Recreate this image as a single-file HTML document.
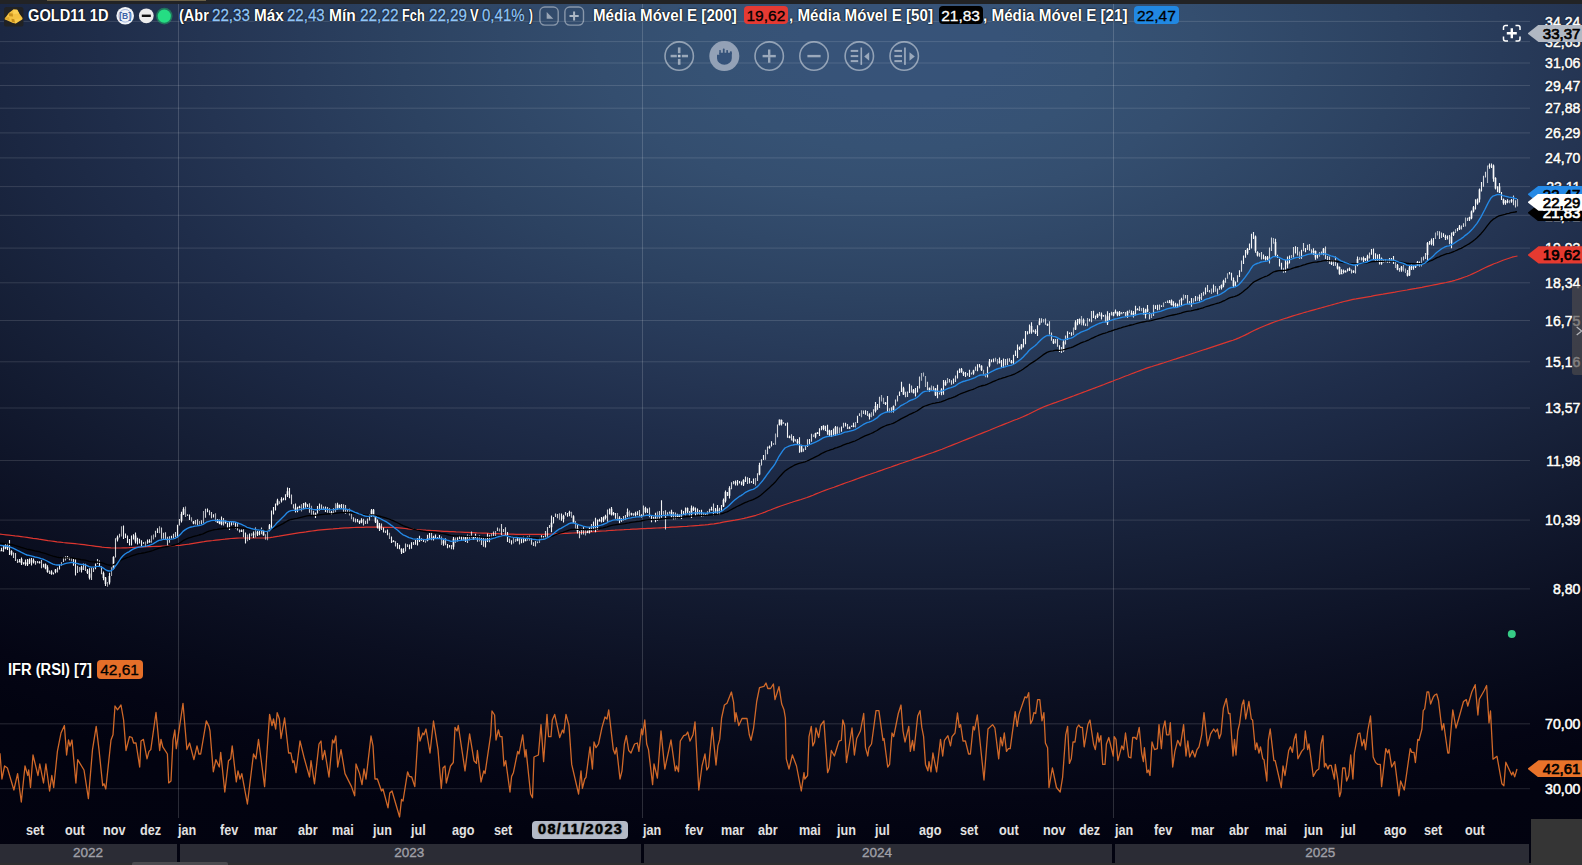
<!DOCTYPE html>
<html lang="pt-BR">
<head>
<meta charset="utf-8">
<title>GOLD11 1D</title>
<style>
*{box-sizing:border-box;margin:0;padding:0}
html,body{width:1582px;height:865px;overflow:hidden;background:#030412}
body{position:relative;font-family:"Liberation Sans",sans-serif;font-weight:bold;color:#fff;
 background:radial-gradient(ellipse 2000px 1000px at 900px 50px,rgb(55,83,121) 0%,rgb(55,83,120) 5%,rgb(54,82,116) 10%,rgb(52,78,111) 15%,rgb(48,72,104) 20%,rgb(44,66,97) 25%,rgb(40,59,90) 30%,rgb(36,52,82) 35%,rgb(31,45,74) 40%,rgb(27,39,66) 45%,rgb(23,33,57) 50%,rgb(19,27,49) 55%,rgb(15,21,41) 60%,rgb(11,15,33) 65%,rgb(7,10,26) 70%,rgb(4,5,20) 75%,rgb(2,3,16) 80%,rgb(2,2,15) 100%);}
.chart{position:absolute;left:0;top:0}
.topstrip{position:absolute;left:0;top:0;width:1582px;height:3.7px;background:#222325}
.topstrip i{position:absolute;left:46.5px;top:0;width:159px;height:1.2px;background:#6a6048}
.t{position:absolute;white-space:nowrap;font-size:15.8px;line-height:18px;top:6.7px;transform-origin:0 50%;text-shadow:0 0 2px #000,0 0 1px #000}
.v{font-weight:normal;color:#92c6f8;-webkit-text-stroke:.3px #92c6f8}
.tag{position:absolute;top:6.1px;height:18.3px;border-radius:4px;font-size:15.5px;line-height:19px;overflow:hidden;text-align:center;color:#000;font-weight:normal;-webkit-text-stroke:.3px currentColor}
.ax{position:absolute;left:1538px;width:42.4px;text-align:right;font-size:14.1px;line-height:19px;white-space:nowrap;font-weight:normal;-webkit-text-stroke:.5px #fff;text-shadow:0 0 2px #000,0 0 1px #000}
.mo{position:absolute;top:821px;font-size:14px;line-height:18px;transform:scaleX(.9);transform-origin:0 50%;color:#e2e2e2;white-space:nowrap}
.yr{position:absolute;top:843.8px;height:18.8px;background:#2b2c35;color:#a0a0a8;font-size:13.5px;line-height:18.8px;font-weight:normal;-webkit-text-stroke:.35px #a0a0a8}
.yr span{position:absolute;top:0}
.ptag{position:absolute;left:1527.5px;width:54.5px;height:17.3px;font-size:15px;line-height:17.3px;color:#000;text-align:right;padding-right:1.6px;font-weight:normal;-webkit-text-stroke:.7px currentColor;
 clip-path:polygon(0 50%,11px 0,100% 0,100% 100%,11px 100%)}
</style>
</head>
<body>
<svg class="chart" width="1582" height="865" viewBox="0 0 1582 865">
<path d="M0 588.9H1530M0 520.1H1530M0 460.5H1530M0 408H1530M0 361.8H1530M0 320.5H1530M0 282.8H1530M0 248.1H1530M0 215.3H1530M0 186.6H1530M0 157.9H1530M0 132.9H1530M0 108.2H1530M0 85.5H1530M0 63.0H1530M0 41.6H1530M0 21.4H1530" stroke="#fff" stroke-opacity=".13" stroke-width="1" fill="none"/>
<path d="M0 723.8H1530M0 788.6H1530" stroke="#fff" stroke-opacity=".1" stroke-width="1.4" fill="none"/>
<path d="M178.5 3.4V818M642.5 3.4V818M1113.5 3.4V818" stroke="#fff" stroke-opacity=".16" stroke-width="1" fill="none"/>
<path d="M0.0 534.2 L3.0 534.5 L6.0 534.8 L9.0 535.1 L12.0 535.5 L15.0 535.9 L18.0 536.2 L21.0 536.6 L24.0 537.0 L27.0 537.4 L30.0 537.8 L33.0 538.3 L36.0 538.7 L39.0 539.2 L42.0 539.6 L45.0 540.1 L48.0 540.6 L51.0 541.0 L54.0 541.4 L57.0 541.8 L60.0 542.1 L63.0 542.5 L66.0 542.8 L69.0 543.1 L72.0 543.4 L75.0 543.7 L78.0 544.0 L81.0 544.3 L84.0 544.7 L87.0 545.1 L90.0 545.5 L93.0 545.9 L96.0 546.3 L99.0 546.7 L102.0 547.2 L105.0 547.5 L108.0 547.7 L111.0 547.9 L114.0 548.0 L117.0 548.0 L120.0 548.0 L123.0 547.9 L126.0 547.8 L129.0 547.7 L132.0 547.5 L135.0 547.3 L138.0 547.1 L141.0 547.0 L144.0 546.8 L147.0 546.7 L150.0 546.6 L153.0 546.5 L156.0 546.4 L159.0 546.3 L162.0 546.1 L165.0 546.0 L168.0 545.9 L171.0 545.8 L174.0 545.7 L177.0 545.5 L180.0 545.3 L183.0 544.9 L186.0 544.5 L189.0 544.1 L192.0 543.6 L195.0 543.1 L198.0 542.6 L201.0 542.1 L204.0 541.7 L207.0 541.2 L210.0 540.8 L213.0 540.5 L216.0 540.1 L219.0 539.8 L222.0 539.5 L225.0 539.2 L228.0 538.8 L231.0 538.5 L234.0 538.3 L237.0 538.1 L240.0 538.0 L243.0 538.0 L246.0 538.0 L249.0 538.0 L252.0 538.0 L255.0 538.0 L258.0 538.0 L261.0 538.0 L264.0 538.0 L267.0 537.8 L270.0 537.6 L273.0 537.2 L276.0 536.7 L279.0 536.2 L282.0 535.6 L285.0 535.1 L288.0 534.6 L291.0 534.1 L294.0 533.6 L297.0 533.1 L300.0 532.7 L303.0 532.3 L306.0 531.9 L309.0 531.4 L312.0 531.0 L315.0 530.6 L318.0 530.2 L321.0 529.9 L324.0 529.6 L327.0 529.3 L330.0 529.1 L333.0 528.9 L336.0 528.6 L339.0 528.4 L342.0 528.1 L345.0 527.9 L348.0 527.8 L351.0 527.6 L354.0 527.5 L357.0 527.4 L360.0 527.4 L363.0 527.3 L366.0 527.2 L369.0 527.1 L372.0 527.1 L375.0 527.1 L378.0 527.1 L381.0 527.2 L384.0 527.3 L387.0 527.3 L390.0 527.4 L393.0 527.5 L396.0 527.6 L399.0 527.9 L402.0 528.2 L405.0 528.5 L408.0 528.8 L411.0 529.1 L414.0 529.4 L417.0 529.6 L420.0 529.8 L423.0 530.0 L426.0 530.2 L429.0 530.3 L432.0 530.5 L435.0 530.7 L438.0 530.9 L441.0 531.1 L444.0 531.3 L447.0 531.4 L450.0 531.6 L453.0 531.7 L456.0 531.9 L459.0 532.0 L462.0 532.1 L465.0 532.3 L468.0 532.4 L471.0 532.6 L474.0 532.7 L477.0 532.9 L480.0 533.0 L483.0 533.1 L486.0 533.2 L489.0 533.4 L492.0 533.5 L495.0 533.6 L498.0 533.7 L501.0 533.9 L504.0 534.0 L507.0 534.1 L510.0 534.2 L513.0 534.2 L516.0 534.3 L519.0 534.3 L522.0 534.3 L525.0 534.3 L528.0 534.3 L531.0 534.3 L534.0 534.3 L537.0 534.3 L540.0 534.3 L543.0 534.3 L546.0 534.2 L549.0 534.1 L552.0 534.0 L555.0 533.9 L558.0 533.7 L561.0 533.6 L564.0 533.4 L567.0 533.3 L570.0 533.1 L573.0 533.0 L576.0 532.8 L579.0 532.6 L582.0 532.4 L585.0 532.2 L588.0 532.0 L591.0 531.8 L594.0 531.6 L597.0 531.4 L600.0 531.2 L603.0 531.0 L606.0 530.8 L609.0 530.5 L612.0 530.3 L615.0 530.2 L618.0 530.0 L621.0 529.8 L624.0 529.7 L627.0 529.5 L630.0 529.4 L633.0 529.2 L636.0 529.1 L639.0 528.9 L642.0 528.7 L645.0 528.6 L648.0 528.4 L651.0 528.3 L654.0 528.1 L657.0 528.0 L660.0 527.8 L663.0 527.7 L666.0 527.5 L669.0 527.4 L672.0 527.2 L675.0 527.1 L678.0 526.9 L681.0 526.7 L684.0 526.5 L687.0 526.3 L690.0 526.0 L693.0 525.8 L696.0 525.6 L699.0 525.4 L702.0 525.1 L705.0 524.9 L708.0 524.6 L711.0 524.2 L714.0 523.8 L717.0 523.3 L720.0 522.8 L723.0 522.2 L726.0 521.7 L729.0 521.2 L732.0 520.7 L735.0 520.2 L738.0 519.6 L741.0 519.0 L744.0 518.4 L747.0 517.7 L750.0 516.9 L753.0 516.1 L756.0 515.3 L759.0 514.3 L762.0 513.2 L765.0 512.1 L768.0 510.8 L771.0 509.7 L774.0 508.5 L777.0 507.4 L780.0 506.3 L783.0 505.2 L786.0 504.2 L789.0 503.2 L792.0 502.3 L795.0 501.3 L798.0 500.4 L801.0 499.5 L804.0 498.5 L807.0 497.5 L810.0 496.4 L813.0 495.2 L816.0 493.9 L819.0 492.7 L822.0 491.5 L825.0 490.4 L828.0 489.3 L831.0 488.2 L834.0 487.2 L837.0 486.1 L840.0 485.0 L843.0 483.9 L846.0 482.8 L849.0 481.8 L852.0 480.7 L855.0 479.6 L858.0 478.5 L861.0 477.4 L864.0 476.4 L867.0 475.3 L870.0 474.3 L873.0 473.2 L876.0 472.2 L879.0 471.1 L882.0 470.1 L885.0 469.0 L888.0 468.0 L891.0 467.0 L894.0 465.9 L897.0 464.9 L900.0 463.8 L903.0 462.8 L906.0 461.7 L909.0 460.7 L912.0 459.7 L915.0 458.6 L918.0 457.6 L921.0 456.6 L924.0 455.6 L927.0 454.5 L930.0 453.5 L933.0 452.5 L936.0 451.4 L939.0 450.3 L942.0 449.2 L945.0 448.0 L948.0 446.8 L951.0 445.6 L954.0 444.4 L957.0 443.2 L960.0 442.0 L963.0 440.8 L966.0 439.6 L969.0 438.4 L972.0 437.2 L975.0 436.0 L978.0 434.8 L981.0 433.6 L984.0 432.4 L987.0 431.2 L990.0 430.0 L993.0 428.7 L996.0 427.5 L999.0 426.3 L1002.0 425.1 L1005.0 423.9 L1008.0 422.7 L1011.0 421.5 L1014.0 420.3 L1017.0 419.2 L1020.0 418.0 L1023.0 416.7 L1026.0 415.4 L1029.0 414.0 L1032.0 412.5 L1035.0 411.0 L1038.0 409.5 L1041.0 408.1 L1044.0 406.8 L1047.0 405.6 L1050.0 404.5 L1053.0 403.4 L1056.0 402.4 L1059.0 401.3 L1062.0 400.2 L1065.0 399.1 L1068.0 398.0 L1071.0 396.9 L1074.0 395.8 L1077.0 394.6 L1080.0 393.5 L1083.0 392.4 L1086.0 391.3 L1089.0 390.1 L1092.0 389.0 L1095.0 387.9 L1098.0 386.7 L1101.0 385.6 L1104.0 384.5 L1107.0 383.3 L1110.0 382.1 L1113.0 381.0 L1116.0 379.8 L1119.0 378.7 L1122.0 377.5 L1125.0 376.3 L1128.0 375.2 L1131.0 374.0 L1134.0 372.9 L1137.0 371.7 L1140.0 370.6 L1143.0 369.5 L1146.0 368.4 L1149.0 367.4 L1152.0 366.5 L1155.0 365.5 L1158.0 364.6 L1161.0 363.6 L1164.0 362.7 L1167.0 361.7 L1170.0 360.8 L1173.0 359.8 L1176.0 358.9 L1179.0 357.9 L1182.0 356.9 L1185.0 356.0 L1188.0 355.0 L1191.0 354.0 L1194.0 353.0 L1197.0 352.0 L1200.0 351.0 L1203.0 350.0 L1206.0 349.1 L1209.0 348.1 L1212.0 347.1 L1215.0 346.1 L1218.0 345.1 L1221.0 344.1 L1224.0 343.1 L1227.0 342.1 L1230.0 341.1 L1233.0 340.2 L1236.0 339.1 L1239.0 337.9 L1242.0 336.5 L1245.0 335.1 L1248.0 333.6 L1251.0 332.0 L1254.0 330.5 L1257.0 329.1 L1260.0 327.8 L1263.0 326.5 L1266.0 325.3 L1269.0 324.1 L1272.0 322.9 L1275.0 321.8 L1278.0 320.8 L1281.0 319.8 L1284.0 318.8 L1287.0 317.9 L1290.0 316.9 L1293.0 315.9 L1296.0 315.0 L1299.0 314.1 L1302.0 313.2 L1305.0 312.3 L1308.0 311.5 L1311.0 310.6 L1314.0 309.8 L1317.0 309.0 L1320.0 308.2 L1323.0 307.3 L1326.0 306.5 L1329.0 305.7 L1332.0 304.8 L1335.0 304.0 L1338.0 303.2 L1341.0 302.3 L1344.0 301.5 L1347.0 300.8 L1350.0 300.1 L1353.0 299.4 L1356.0 298.9 L1359.0 298.3 L1362.0 297.8 L1365.0 297.3 L1368.0 296.8 L1371.0 296.3 L1374.0 295.7 L1377.0 295.2 L1380.0 294.7 L1383.0 294.2 L1386.0 293.6 L1389.0 293.1 L1392.0 292.6 L1395.0 292.1 L1398.0 291.5 L1401.0 291.0 L1404.0 290.5 L1407.0 290.0 L1410.0 289.4 L1413.0 288.9 L1416.0 288.4 L1419.0 287.8 L1422.0 287.3 L1425.0 286.7 L1428.0 286.1 L1431.0 285.5 L1434.0 284.9 L1437.0 284.3 L1440.0 283.7 L1443.0 283.1 L1446.0 282.5 L1449.0 281.8 L1452.0 281.1 L1455.0 280.3 L1458.0 279.4 L1461.0 278.4 L1464.0 277.3 L1467.0 276.2 L1470.0 275.0 L1473.0 273.6 L1476.0 272.2 L1479.0 270.8 L1482.0 269.2 L1485.0 267.8 L1488.0 266.4 L1491.0 265.1 L1494.0 263.8 L1497.0 262.7 L1500.0 261.5 L1503.0 260.3 L1506.0 259.2 L1509.0 258.2 L1512.0 257.2 L1515.0 256.5 L1517.5 256.0" stroke="#dd362f" stroke-width="1.2" fill="none" stroke-linejoin="round"/>
<path d="M1.5 547.8V550.9M3.5 546.1V551.7M5.5 544.0V549.3M7.5 543.5V550.1M9.5 540.1V554.9M11.5 550.3V555.4M19.5 558.9V562.2M21.5 557.6V565.0M23.5 562.2V564.5M25.5 559.4V565.8M27.5 558.9V566.1M29.5 558.4V564.0M31.5 558.0V565.5M33.5 558.4V563.6M39.5 561.3V563.5M43.5 563.7V567.5M45.5 563.4V569.2M47.5 565.2V572.7M51.5 570.3V574.7M53.5 572.5V574.6M55.5 569.0V573.3M59.5 564.7V569.4M67.5 556.0V558.7M73.5 558.7V565.7M75.5 559.2V575.4M81.5 565.8V572.6M87.5 569.0V574.0M89.5 568.2V579.5M95.5 563.5V569.3M99.5 560.4V566.5M103.5 571.6V580.3M105.5 577.1V586.1M109.5 572.7V584.6M113.5 556.3V569.3M117.5 535.4V541.6M123.5 525.6V539.1M125.5 533.4V537.9M127.5 535.5V543.0M129.5 539.0V545.4M131.5 535.4V545.5M133.5 534.3V539.6M135.5 532.5V543.5M137.5 537.7V544.5M139.5 538.8V543.6M141.5 540.2V546.3M147.5 539.4V543.8M149.5 539.3V542.7M157.5 528.3V533.0M171.5 535.7V538.4M177.5 524.8V537.4M181.5 511.7V522.4M183.5 507.2V514.9M189.5 514.5V520.1M193.5 521.1V524.3M207.5 508.4V512.2M213.5 514.3V517.5M217.5 519.1V523.1M219.5 519.5V524.2M221.5 516.6V525.2M225.5 520.7V523.8M227.5 522.7V527.8M229.5 522.0V530.1M231.5 521.4V525.4M235.5 522.1V528.5M241.5 529.5V532.0M245.5 532.4V543.4M249.5 533.6V539.9M253.5 531.5V538.1M257.5 530.8V536.0M259.5 530.7V535.3M263.5 529.8V535.8M269.5 524.1V531.3M271.5 510.6V529.1M273.5 507.1V514.5M275.5 503.6V510.5M277.5 498.7V505.6M281.5 497.3V502.5M283.5 497.7V500.2M285.5 494.3V500.2M287.5 487.6V497.0M289.5 488.0V498.2M295.5 503.5V512.4M297.5 506.8V512.2M299.5 505.7V508.3M303.5 503.0V509.2M305.5 502.2V507.8M307.5 504.2V507.0M315.5 512.6V518.1M317.5 506.1V513.4M319.5 503.5V510.5M325.5 506.4V512.1M331.5 510.9V514.4M337.5 502.7V509.5M339.5 504.5V507.9M341.5 504.0V508.3M357.5 519.1V522.3M359.5 520.5V524.1M361.5 518.2V523.3M371.5 509.0V517.0M373.5 509.1V516.4M375.5 514.9V523.1M377.5 519.6V528.5M379.5 523.1V531.0M383.5 527.5V532.5M387.5 529.6V535.2M391.5 536.6V543.1M393.5 540.2V542.1M397.5 543.1V548.8M399.5 544.7V549.2M401.5 548.2V553.9M403.5 548.2V552.9M409.5 544.4V549.2M411.5 542.2V548.7M415.5 540.1V544.8M417.5 538.1V545.4M419.5 535.8V542.1M423.5 539.5V542.0M427.5 534.7V541.3M429.5 533.0V539.4M433.5 535.8V540.6M435.5 534.4V538.1M437.5 537.0V539.1M439.5 534.9V537.9M443.5 539.7V545.7M447.5 543.9V548.3M449.5 544.9V547.6M453.5 536.9V549.6M457.5 537.3V541.5M459.5 535.8V538.9M461.5 535.9V540.7M465.5 536.7V542.0M473.5 536.6V540.0M475.5 533.8V538.1M485.5 538.5V547.6M487.5 533.5V542.0M507.5 532.0V541.9M511.5 540.3V544.4M517.5 537.8V541.2M521.5 538.6V543.2M523.5 536.4V542.7M525.5 538.2V541.2M541.5 535.3V539.8M543.5 536.0V539.8M551.5 515.5V532.2M553.5 517.1V523.6M561.5 513.5V520.7M563.5 514.7V522.5M567.5 512.9V516.8M569.5 510.7V516.2M573.5 515.2V523.0M577.5 524.8V533.5M587.5 530.3V532.9M589.5 526.9V533.5M593.5 521.4V530.2M595.5 517.7V532.3M597.5 519.5V530.0M599.5 518.7V521.5M601.5 516.9V522.5M603.5 516.4V522.1M605.5 514.8V519.4M609.5 508.5V514.5M611.5 507.0V515.6M613.5 511.9V515.4M615.5 513.0V518.8M619.5 516.3V523.2M621.5 518.3V521.7M627.5 508.6V517.0M631.5 512.7V515.5M635.5 511.7V516.5M637.5 511.3V515.3M641.5 514.3V517.6M645.5 506.8V513.3M647.5 508.4V513.0M651.5 514.9V522.3M653.5 516.7V519.7M655.5 512.7V522.3M661.5 500.3V517.8M671.5 509.8V517.2M677.5 513.7V518.3M679.5 514.6V517.5M681.5 509.7V519.1M683.5 510.9V514.6M685.5 507.6V515.2M687.5 507.4V513.3M691.5 505.4V517.9M693.5 506.6V510.9M695.5 507.5V516.1M697.5 508.5V514.5M701.5 509.7V516.7M705.5 513.6V515.8M711.5 506.8V510.4M715.5 507.9V513.2M717.5 504.9V514.9M721.5 504.9V511.6M723.5 498.4V507.0M725.5 490.5V502.5M727.5 492.0V495.9M729.5 486.3V498.4M735.5 480.4V485.6M737.5 480.0V485.4M739.5 481.0V483.6M741.5 481.5V485.2M743.5 479.2V486.1M745.5 476.5V482.1M749.5 477.9V483.4M753.5 478.5V484.1M759.5 462.7V475.2M763.5 455.0V460.0M769.5 445.6V448.8M771.5 441.2V446.6M779.5 419.5V425.5M781.5 419.4V425.4M785.5 423.2V425.8M787.5 422.5V437.7M789.5 435.5V438.2M793.5 436.1V442.5M797.5 439.1V444.3M799.5 437.3V452.7M801.5 444.8V452.3M809.5 438.9V444.0M815.5 432.7V438.2M817.5 432.0V434.0M819.5 428.2V436.1M821.5 426.0V430.3M823.5 425.2V430.3M825.5 425.7V430.9M827.5 424.7V434.7M829.5 429.7V436.1M831.5 429.9V437.0M833.5 428.6V435.2M835.5 426.0V435.8M841.5 426.6V431.7M845.5 422.7V426.6M849.5 426.6V428.7M851.5 425.4V426.9M853.5 422.8V427.2M857.5 415.8V422.9M865.5 410.3V414.8M869.5 413.3V419.6M875.5 401.9V412.5M877.5 404.1V409.8M885.5 402.0V405.1M887.5 396.0V411.9M893.5 405.4V412.4M899.5 391.5V395.9M901.5 381.7V391.9M903.5 386.8V395.1M909.5 383.8V392.9M913.5 389.1V393.6M915.5 388.0V396.4M917.5 386.1V392.4M929.5 387.4V391.8M935.5 388.1V395.9M937.5 384.7V398.3M941.5 388.2V395.2M943.5 380.0V394.8M945.5 380.2V385.7M953.5 378.5V383.8M957.5 370.4V378.6M959.5 368.6V372.9M961.5 368.0V372.8M963.5 371.5V376.1M965.5 372.1V377.1M969.5 369.7V377.1M973.5 369.8V374.8M977.5 364.3V371.3M979.5 364.0V367.4M981.5 365.3V371.0M987.5 366.4V377.5M989.5 359.0V367.2M991.5 359.5V362.2M993.5 358.5V362.3M999.5 357.5V363.4M1001.5 360.0V367.3M1003.5 358.6V367.8M1011.5 360.1V363.5M1013.5 354.8V364.1M1015.5 350.6V356.1M1017.5 344.6V358.1M1019.5 346.5V350.1M1021.5 343.9V349.4M1023.5 338.8V347.4M1025.5 331.1V344.2M1027.5 331.3V334.5M1029.5 324.6V333.8M1031.5 322.2V333.7M1035.5 329.2V333.9M1037.5 325.2V336.0M1039.5 318.3V325.3M1047.5 323.6V325.9M1053.5 338.9V344.1M1059.5 345.2V351.9M1063.5 340.3V351.7M1067.5 331.2V340.0M1069.5 332.6V334.1M1071.5 332.2V335.8M1075.5 320.2V330.1M1077.5 318.9V325.3M1079.5 318.4V324.2M1083.5 318.6V325.6M1089.5 318.8V321.6M1093.5 310.7V317.9M1095.5 315.5V319.3M1097.5 313.4V318.0M1101.5 312.6V319.6M1103.5 315.1V316.7M1107.5 311.2V325.0M1109.5 313.1V319.9M1113.5 312.1V316.2M1115.5 309.6V313.6M1117.5 311.5V316.2M1119.5 310.9V316.0M1121.5 312.3V313.6M1123.5 312.0V313.3M1127.5 310.8V317.8M1131.5 310.4V314.8M1133.5 310.9V317.6M1135.5 305.8V315.5M1137.5 308.2V310.1M1143.5 307.7V314.6M1145.5 308.8V318.6M1147.5 304.9V312.3M1155.5 305.2V309.0M1157.5 304.8V310.2M1161.5 305.2V307.1M1169.5 299.9V302.9M1171.5 299.4V305.5M1173.5 301.2V306.8M1175.5 302.8V307.5M1177.5 303.4V307.5M1181.5 297.8V305.8M1191.5 297.9V306.8M1195.5 296.1V301.3M1199.5 294.5V301.6M1205.5 287.5V294.6M1213.5 284.4V292.5M1221.5 284.4V289.5M1223.5 279.8V287.2M1229.5 272.1V274.5M1231.5 272.7V280.6M1233.5 277.6V287.5M1235.5 281.6V286.6M1239.5 270.2V277.1M1243.5 255.4V264.0M1245.5 249.9V257.7M1247.5 248.0V254.7M1249.5 243.4V250.0M1251.5 233.7V248.4M1253.5 232.1V239.1M1255.5 235.5V252.7M1257.5 251.3V256.6M1263.5 254.5V259.3M1265.5 255.9V260.4M1267.5 256.1V260.2M1275.5 238.8V256.2M1277.5 254.7V258.1M1279.5 258.7V266.5M1281.5 262.7V269.4M1285.5 260.1V272.5M1287.5 256.4V268.3M1289.5 255.5V263.6M1295.5 246.3V253.6M1301.5 249.8V258.8M1305.5 248.0V252.3M1313.5 248.2V254.9M1315.5 250.5V259.8M1317.5 254.1V258.4M1323.5 247.9V255.3M1331.5 260.6V265.1M1337.5 263.2V269.6M1339.5 266.5V274.7M1341.5 269.2V274.0M1343.5 269.5V273.5M1345.5 270.3V272.5M1347.5 268.6V271.4M1349.5 267.6V271.1M1353.5 270.2V273.0M1357.5 256.4V266.2M1363.5 256.6V262.3M1365.5 257.9V261.1M1367.5 254.8V261.2M1371.5 249.0V254.7M1373.5 248.4V259.2M1375.5 253.2V261.3M1377.5 254.4V261.3M1379.5 254.0V264.4M1381.5 257.5V264.8M1383.5 259.8V262.6M1385.5 259.4V262.0M1387.5 260.4V262.7M1389.5 257.9V262.7M1391.5 258.1V261.3M1393.5 256.1V264.1M1397.5 264.1V270.3M1401.5 266.1V271.7M1407.5 270.1V276.5M1409.5 266.0V276.1M1411.5 264.4V270.1M1413.5 265.2V269.8M1415.5 264.8V268.0M1417.5 261.0V266.1M1419.5 261.4V266.4M1427.5 241.9V261.0M1429.5 241.0V244.7M1431.5 238.4V245.2M1433.5 237.9V245.8M1443.5 233.2V237.0M1445.5 234.8V240.1M1447.5 235.6V239.6M1451.5 232.6V248.3M1453.5 231.4V236.1M1457.5 228.0V231.2M1459.5 225.0V229.9M1469.5 216.8V220.9M1471.5 210.6V219.3M1473.5 205.9V212.4M1475.5 199.2V209.6M1477.5 198.5V204.8M1479.5 188.5V202.6M1481.5 182.1V191.5M1489.5 163.5V168.8M1491.5 163.4V167.9M1493.5 164.4V181.8M1495.5 177.2V189.6M1497.5 186.3V192.2M1499.5 182.9V192.9M1501.5 192.0V199.9M1503.5 198.4V204.8M1505.5 200.1V204.7M1507.5 199.3V203.2M1511.5 199.0V202.8" stroke="#fff" stroke-opacity="0.95" stroke-width="1.1" fill="none"/>
<path d="M13.5 552.4V558.1M15.5 553.1V560.9M17.5 559.3V563.0M35.5 560.9V564.7M37.5 561.0V563.2M41.5 560.0V568.2M49.5 570.5V574.1M57.5 567.6V572.4M63.5 557.2V562.1M65.5 556.2V560.6M69.5 557.1V560.2M77.5 565.7V572.9M83.5 563.4V569.9M85.5 563.8V571.1M91.5 567.8V579.9M93.5 567.9V572.1M97.5 559.0V564.1M101.5 566.2V574.2M115.5 538.3V557.5M119.5 533.8V537.5M143.5 542.0V544.0M155.5 530.7V537.2M161.5 527.5V538.7M163.5 532.7V538.8M165.5 532.2V540.1M167.5 536.8V545.4M169.5 536.3V542.8M173.5 533.8V538.1M175.5 531.9V537.0M179.5 519.0V525.6M187.5 514.3V516.1M195.5 520.0V524.5M197.5 519.3V525.2M201.5 520.3V524.3M205.5 508.8V517.8M209.5 510.2V515.3M211.5 512.1V518.2M223.5 517.9V525.6M237.5 523.1V530.5M239.5 529.4V532.5M243.5 529.2V537.2M261.5 527.5V534.2M291.5 494.6V504.3M293.5 504.3V508.6M309.5 503.3V512.8M313.5 510.7V515.6M321.5 504.4V510.0M323.5 506.5V508.7M327.5 507.0V512.7M343.5 504.2V512.9M345.5 505.1V513.8M347.5 510.1V512.7M353.5 517.2V521.8M355.5 518.5V522.6M363.5 518.8V525.5M365.5 520.7V524.0M367.5 518.5V523.7M369.5 513.9V520.4M381.5 523.5V530.1M385.5 530.5V532.9M395.5 541.3V546.5M405.5 543.4V551.6M407.5 544.2V546.9M413.5 542.0V544.9M421.5 538.2V540.9M431.5 532.5V540.2M445.5 538.3V545.3M451.5 545.1V549.2M463.5 535.9V540.5M467.5 534.4V542.9M471.5 531.6V537.4M477.5 536.2V541.7M481.5 537.8V544.9M483.5 537.7V546.8M489.5 534.7V542.2M493.5 531.5V536.2M497.5 527.6V531.1M501.5 524.1V535.3M503.5 529.1V531.9M505.5 527.3V536.0M509.5 538.6V543.1M519.5 538.1V544.6M531.5 537.0V544.8M533.5 542.3V545.9M535.5 541.1V546.5M537.5 541.4V543.2M545.5 531.1V538.1M547.5 527.0V537.2M549.5 525.1V528.1M555.5 513.5V517.0M557.5 513.9V518.3M565.5 512.0V515.5M579.5 531.0V538.2M581.5 528.7V534.6M583.5 526.5V534.6M591.5 524.1V532.1M607.5 509.4V521.7M623.5 516.1V520.4M625.5 515.1V519.8M633.5 513.2V515.8M639.5 510.1V516.2M643.5 505.5V516.0M649.5 507.4V517.3M659.5 510.9V518.9M665.5 510.3V529.4M667.5 512.2V515.8M669.5 511.5V513.8M673.5 512.1V519.4M675.5 512.5V519.2M689.5 510.9V515.4M699.5 509.9V514.8M703.5 513.0V516.3M709.5 508.7V512.8M713.5 503.5V515.5M719.5 507.8V514.7M731.5 482.3V489.2M733.5 480.9V484.2M747.5 477.3V484.1M751.5 481.1V483.1M757.5 473.2V481.0M761.5 459.3V465.5M767.5 446.6V454.3M777.5 424.4V437.2M791.5 434.2V440.5M795.5 439.3V441.6M803.5 448.5V451.7M805.5 446.1V449.9M807.5 439.3V447.0M811.5 433.8V441.7M837.5 426.4V433.8M843.5 422.8V427.7M847.5 423.9V429.1M859.5 413.2V416.0M863.5 410.4V414.0M867.5 411.0V415.9M873.5 409.2V415.8M879.5 396.8V407.9M891.5 407.2V412.5M895.5 399.6V405.7M897.5 395.6V401.6M905.5 391.7V397.2M907.5 391.5V397.0M911.5 385.4V392.5M919.5 376.6V388.6M927.5 381.8V389.9M933.5 386.2V391.0M939.5 392.4V394.5M949.5 378.9V382.4M951.5 380.3V384.7M955.5 375.4V382.1M967.5 373.0V375.8M971.5 372.5V374.5M975.5 366.6V370.8M1005.5 359.0V365.6M1007.5 358.5V365.0M1009.5 358.2V361.7M1033.5 329.7V332.3M1041.5 318.2V322.8M1045.5 318.4V324.8M1049.5 321.2V334.6M1051.5 332.4V340.8M1055.5 339.1V343.5M1057.5 338.8V346.8M1061.5 346.9V353.0M1065.5 335.6V344.4M1085.5 323.5V325.9M1091.5 311.0V322.3M1099.5 311.9V315.8M1105.5 314.6V322.3M1111.5 311.7V315.4M1125.5 312.1V316.2M1139.5 306.3V310.9M1149.5 312.3V319.2M1153.5 304.7V316.0M1159.5 304.5V309.8M1165.5 301.8V303.1M1167.5 300.5V303.1M1179.5 299.7V306.3M1185.5 295.1V298.4M1187.5 295.0V304.0M1189.5 301.0V304.2M1201.5 292.9V299.9M1203.5 291.7V295.8M1207.5 284.9V292.1M1209.5 290.1V292.6M1217.5 288.4V294.5M1219.5 286.0V289.8M1225.5 277.8V282.8M1237.5 275.3V282.2M1241.5 260.6V271.7M1259.5 253.0V256.8M1261.5 252.1V259.4M1269.5 247.5V263.5M1271.5 237.6V251.0M1293.5 247.0V257.4M1297.5 247.0V255.5M1303.5 243.0V251.3M1307.5 244.7V250.1M1309.5 244.0V250.8M1311.5 249.3V254.1M1321.5 251.6V254.5M1325.5 246.6V259.0M1327.5 256.0V261.6M1329.5 256.5V264.0M1333.5 260.0V266.0M1335.5 256.5V265.7M1351.5 269.4V273.5M1355.5 264.5V273.6M1361.5 257.3V260.5M1369.5 252.6V258.4M1399.5 268.0V271.7M1423.5 256.5V260.6M1425.5 253.1V258.9M1439.5 231.2V238.9M1441.5 232.4V238.0M1449.5 235.1V244.2M1461.5 225.4V229.6M1463.5 223.3V226.9M1467.5 217.8V221.1M1483.5 175.7V186.7M1485.5 171.7V177.5M1513.5 195.6V205.3M1515.5 200.3V207.4" stroke="#fff" stroke-opacity="0.8" stroke-width="1.1" fill="none"/>
<path d="M61.5 561.9V565.7M71.5 557.9V561.3M79.5 567.1V571.7M107.5 582.1V586.7M111.5 567.2V576.1M121.5 526.2V536.6M145.5 541.5V547.0M151.5 535.4V542.8M153.5 534.4V539.6M159.5 526.2V533.3M185.5 506.4V516.9M191.5 517.3V521.4M199.5 520.9V524.6M203.5 511.1V523.3M215.5 513.2V521.7M233.5 521.2V524.9M247.5 534.5V541.3M251.5 533.2V536.2M255.5 527.3V537.6M265.5 534.3V539.7M267.5 529.8V540.3M279.5 501.2V504.1M301.5 504.3V511.6M311.5 505.8V515.0M329.5 508.0V513.1M333.5 507.9V513.2M335.5 503.3V512.2M349.5 508.5V515.4M351.5 513.7V519.2M389.5 532.7V538.9M425.5 540.5V542.8M441.5 536.5V544.9M455.5 537.4V542.9M469.5 535.2V540.4M479.5 535.3V541.5M491.5 533.5V538.2M495.5 530.9V536.1M499.5 528.6V531.6M513.5 536.2V543.5M515.5 538.7V541.9M527.5 536.1V540.7M529.5 535.6V540.7M539.5 537.8V543.1M559.5 513.2V519.7M571.5 511.8V517.8M575.5 521.1V529.2M585.5 529.8V535.5M617.5 513.0V520.5M629.5 510.5V516.4M657.5 511.6V521.0M663.5 511.1V514.8M707.5 511.1V516.1M755.5 477.9V485.4M765.5 449.7V459.7M773.5 442.9V445.1M775.5 433.5V444.7M783.5 421.9V424.0M813.5 434.4V436.9M839.5 427.6V433.5M855.5 422.0V427.6M861.5 410.2V417.2M871.5 412.3V417.2M881.5 394.9V401.6M883.5 397.8V404.1M889.5 408.2V412.4M921.5 373.1V380.7M923.5 372.4V376.4M925.5 376.0V386.9M931.5 385.6V390.1M947.5 378.1V383.2M983.5 369.7V374.6M985.5 373.5V377.2M995.5 357.8V361.4M997.5 358.9V364.3M1043.5 318.9V322.6M1073.5 327.6V335.1M1081.5 316.1V325.2M1087.5 318.1V326.2M1129.5 309.8V312.9M1141.5 308.1V311.2M1151.5 312.9V318.1M1163.5 302.4V306.9M1183.5 294.5V300.3M1193.5 298.2V302.7M1197.5 296.6V300.8M1211.5 288.5V293.9M1215.5 285.9V291.7M1227.5 273.3V278.8M1273.5 237.9V243.8M1283.5 267.8V273.1M1291.5 255.1V258.0M1299.5 251.5V259.0M1319.5 252.1V256.7M1359.5 257.2V260.0M1395.5 260.0V268.1M1403.5 264.9V271.5M1405.5 268.5V272.9M1421.5 257.2V266.4M1435.5 232.6V239.0M1437.5 230.9V235.4M1455.5 229.2V232.9M1465.5 217.4V226.4M1487.5 165.5V183.1M1509.5 200.3V203.2M1517.5 199.1V206.4" stroke="#fff" stroke-opacity="0.62" stroke-width="1.1" fill="none"/>
<path d="M1.5 550.0V551.5M5.5 545.4V548.8M7.5 546.5V548.0M11.5 551.1V554.2M19.5 560.9V562.4M21.5 559.0V563.2M25.5 561.9V564.1M27.5 563.1V564.6M29.5 559.6V562.8M33.5 560.2V562.5M39.5 561.8V563.3M45.5 564.2V568.3M47.5 567.3V571.9M51.5 571.5V574.1M55.5 569.6V571.9M67.5 556.9V558.4M81.5 567.2V570.0M87.5 570.4V573.1M89.5 573.5V577.7M103.5 572.9V578.0M105.5 577.5V584.0M109.5 576.0V582.6M113.5 556.9V568.8M117.5 537.2V539.6M135.5 535.5V541.5M149.5 541.0V542.5M181.5 514.0V520.7M183.5 509.0V514.2M193.5 521.6V523.5M217.5 520.0V522.5M219.5 520.0V523.5M221.5 520.4V524.2M225.5 521.2V522.7M241.5 530.3V531.8M253.5 533.6V535.3M257.5 532.0V534.6M263.5 530.9V535.2M269.5 525.2V530.7M277.5 500.5V504.7M281.5 499.1V500.8M287.5 491.2V495.2M295.5 507.7V510.2M299.5 506.7V508.2M305.5 503.2V505.5M315.5 513.5V515.0M331.5 512.0V513.5M337.5 504.4V508.1M339.5 505.0V507.3M359.5 521.2V522.7M361.5 520.1V522.5M371.5 510.5V515.9M373.5 509.8V515.2M375.5 515.6V521.8M377.5 521.3V527.5M379.5 525.4V529.1M393.5 540.8V542.3M401.5 548.9V551.8M403.5 551.2V552.7M419.5 539.0V540.5M427.5 538.3V540.4M433.5 536.7V538.2M443.5 540.6V543.4M453.5 538.8V546.8M465.5 537.2V540.5M473.5 537.2V538.7M517.5 538.7V540.7M525.5 539.7V541.2M551.5 522.7V527.2M563.5 516.0V519.0M569.5 511.9V513.4M573.5 516.3V522.5M577.5 528.1V531.5M587.5 531.8V533.3M589.5 528.8V531.6M599.5 520.1V521.6M603.5 517.8V520.4M605.5 516.1V518.1M611.5 508.8V514.5M613.5 513.0V514.5M619.5 517.7V520.5M621.5 519.0V520.5M627.5 511.9V515.6M631.5 513.2V514.7M635.5 513.3V515.1M641.5 515.0V516.5M645.5 508.1V512.1M655.5 517.5V519.0M671.5 511.8V516.2M677.5 515.2V517.1M679.5 515.3V516.9M687.5 507.9V511.5M691.5 508.2V514.2M693.5 507.8V509.9M697.5 512.1V513.6M705.5 514.2V515.7M711.5 508.9V510.4M717.5 509.6V511.1M723.5 499.9V506.5M725.5 491.9V500.8M729.5 487.9V495.7M735.5 481.7V483.6M743.5 480.0V484.5M759.5 464.9V474.6M769.5 446.5V448.0M779.5 419.6V424.9M781.5 420.1V424.0M789.5 436.4V437.9M793.5 438.4V440.9M797.5 440.8V443.2M801.5 446.1V451.7M815.5 433.2V436.8M817.5 432.5V434.0M823.5 425.7V429.0M827.5 430.3V431.8M829.5 430.7V435.2M835.5 426.9V434.2M849.5 427.3V428.8M853.5 425.6V427.1M869.5 414.2V417.1M875.5 405.9V411.0M885.5 402.6V404.1M893.5 406.2V410.2M903.5 388.2V394.6M913.5 389.7V393.1M929.5 387.8V389.9M935.5 388.6V395.3M941.5 389.5V393.1M945.5 382.1V385.3M961.5 369.0V372.3M963.5 372.7V374.2M973.5 370.6V373.6M981.5 365.8V370.0M989.5 361.4V365.8M999.5 361.3V362.8M1011.5 361.4V362.9M1019.5 347.5V349.0M1021.5 344.5V347.7M1031.5 326.1V332.2M1035.5 331.0V332.5M1039.5 321.3V324.8M1047.5 324.1V325.6M1053.5 340.8V343.2M1063.5 341.7V350.7M1075.5 322.2V329.4M1079.5 319.1V322.8M1083.5 319.7V323.3M1097.5 313.9V317.0M1101.5 314.4V316.4M1107.5 316.3V323.2M1113.5 312.5V315.6M1115.5 311.6V313.2M1117.5 312.2V315.3M1119.5 312.3V314.4M1121.5 312.7V314.2M1127.5 311.6V315.8M1131.5 313.3V314.8M1133.5 312.7V314.8M1137.5 309.0V310.5M1145.5 310.2V315.0M1147.5 308.8V311.6M1169.5 301.7V303.2M1171.5 300.4V305.1M1173.5 304.1V305.6M1177.5 304.5V306.0M1181.5 298.9V300.5M1199.5 297.1V298.7M1221.5 285.0V287.9M1223.5 281.0V285.3M1233.5 279.9V286.0M1247.5 249.1V253.3M1255.5 236.5V250.7M1257.5 251.9V255.6M1265.5 257.3V258.8M1267.5 257.2V259.5M1275.5 242.1V254.7M1287.5 262.2V264.5M1313.5 250.8V252.5M1315.5 251.1V257.4M1323.5 248.8V254.2M1331.5 262.4V263.9M1337.5 265.8V268.4M1339.5 266.9V273.8M1341.5 272.9V274.4M1343.5 270.5V272.0M1345.5 270.9V272.4M1349.5 268.4V270.6M1353.5 270.8V272.3M1357.5 259.1V264.9M1363.5 257.9V260.2M1365.5 258.5V260.0M1367.5 256.2V258.4M1381.5 258.2V263.7M1385.5 260.7V262.2M1389.5 260.0V261.5M1391.5 260.1V261.6M1393.5 259.7V262.0M1397.5 264.9V269.8M1401.5 266.8V270.2M1407.5 273.0V275.7M1409.5 267.4V275.3M1411.5 266.3V268.3M1415.5 265.4V267.3M1417.5 262.0V265.6M1427.5 243.0V254.9M1431.5 240.2V243.9M1445.5 236.4V237.9M1451.5 236.6V242.9M1453.5 231.9V234.8M1459.5 226.5V229.2M1469.5 217.3V219.4M1471.5 211.5V218.3M1473.5 207.2V211.4M1477.5 199.5V203.4M1479.5 189.5V199.5M1489.5 165.2V166.7M1493.5 165.6V178.7M1495.5 178.1V188.4M1499.5 186.6V192.4M1503.5 199.3V203.3M1505.5 201.3V203.0M1507.5 200.8V202.3M1511.5 200.0V201.5" stroke="#fff" stroke-opacity="0.5" stroke-width="2.2" fill="none"/>
<path d="M0.0 543.0 L1.0 543.3 L3.0 543.5 L5.0 543.7 L7.0 543.8 L9.0 544.1 L11.0 544.5 L13.0 544.9 L15.0 545.5 L17.0 546.1 L19.0 546.7 L21.0 547.3 L23.0 547.9 L25.0 548.5 L27.0 549.1 L29.0 549.5 L31.0 549.9 L33.0 550.4 L35.0 550.9 L37.0 551.3 L39.0 551.7 L41.0 552.3 L43.0 552.8 L45.0 553.4 L47.0 554.1 L49.0 554.8 L51.0 555.5 L53.0 556.2 L55.0 556.7 L57.0 557.2 L59.0 557.5 L61.0 557.7 L63.0 557.8 L65.0 557.8 L67.0 557.8 L69.0 557.8 L71.0 557.9 L73.0 558.1 L75.0 558.5 L77.0 558.8 L79.0 559.2 L81.0 559.6 L83.0 559.8 L85.0 560.2 L87.0 560.7 L89.0 561.3 L91.0 561.7 L93.0 561.9 L95.0 562.0 L97.0 562.0 L99.0 562.1 L101.0 562.5 L103.0 563.1 L105.0 563.9 L107.0 564.6 L109.0 565.1 L111.0 565.2 L113.0 564.9 L115.0 563.9 L117.0 562.8 L119.0 561.7 L121.0 560.3 L123.0 559.2 L125.0 558.3 L127.0 557.6 L129.0 557.0 L131.0 556.2 L133.0 555.4 L135.0 554.8 L137.0 554.2 L139.0 553.7 L141.0 553.4 L143.0 553.0 L145.0 552.6 L147.0 552.1 L149.0 551.7 L151.0 551.1 L153.0 550.5 L155.0 549.7 L157.0 548.9 L159.0 548.1 L161.0 547.7 L163.0 547.1 L165.0 546.8 L167.0 546.5 L169.0 546.2 L171.0 545.8 L173.0 545.4 L175.0 545.0 L177.0 544.2 L179.0 543.3 L181.0 542.1 L183.0 540.7 L185.0 539.7 L187.0 538.7 L189.0 537.9 L191.0 537.3 L193.0 536.7 L195.0 536.1 L197.0 535.6 L199.0 535.0 L201.0 534.5 L203.0 533.8 L205.0 532.8 L207.0 531.9 L209.0 531.2 L211.0 530.6 L213.0 530.0 L215.0 529.7 L217.0 529.4 L219.0 529.0 L221.0 528.8 L223.0 528.5 L225.0 528.2 L227.0 528.2 L229.0 528.0 L231.0 527.7 L233.0 527.5 L235.0 527.4 L237.0 527.5 L239.0 527.7 L241.0 527.8 L243.0 528.1 L245.0 528.4 L247.0 528.8 L249.0 529.0 L251.0 529.2 L253.0 529.4 L255.0 529.6 L257.0 529.7 L259.0 529.8 L261.0 529.9 L263.0 530.1 L265.0 530.4 L267.0 530.5 L269.0 530.2 L271.0 529.6 L273.0 528.7 L275.0 527.8 L277.0 526.6 L279.0 525.7 L281.0 524.6 L283.0 523.6 L285.0 522.4 L287.0 521.2 L289.0 520.2 L291.0 519.5 L293.0 519.1 L295.0 518.7 L297.0 518.3 L299.0 517.8 L301.0 517.3 L303.0 516.8 L305.0 516.3 L307.0 515.9 L309.0 515.6 L311.0 515.5 L313.0 515.5 L315.0 515.4 L317.0 515.2 L319.0 514.9 L321.0 514.6 L323.0 514.3 L325.0 514.1 L327.0 514.0 L329.0 513.9 L331.0 513.8 L333.0 513.7 L335.0 513.4 L337.0 513.0 L339.0 512.8 L341.0 512.6 L343.0 512.5 L345.0 512.4 L347.0 512.4 L349.0 512.5 L351.0 512.7 L353.0 513.0 L355.0 513.3 L357.0 513.6 L359.0 513.9 L361.0 514.2 L363.0 514.6 L365.0 514.9 L367.0 515.1 L369.0 515.1 L371.0 514.9 L373.0 515.0 L375.0 515.2 L377.0 515.7 L379.0 516.1 L381.0 516.5 L383.0 517.1 L385.0 517.7 L387.0 518.3 L389.0 519.0 L391.0 519.9 L393.0 520.7 L395.0 521.6 L397.0 522.5 L399.0 523.5 L401.0 524.6 L403.0 525.6 L405.0 526.3 L407.0 527.1 L409.0 527.9 L411.0 528.5 L413.0 529.1 L415.0 529.6 L417.0 530.1 L419.0 530.4 L421.0 530.8 L423.0 531.2 L425.0 531.5 L427.0 531.8 L429.0 531.9 L431.0 532.1 L433.0 532.3 L435.0 532.5 L437.0 532.7 L439.0 532.9 L441.0 533.3 L443.0 533.6 L445.0 534.0 L447.0 534.5 L449.0 535.0 L451.0 535.4 L453.0 535.6 L455.0 535.8 L457.0 535.9 L459.0 535.9 L461.0 536.0 L463.0 536.1 L465.0 536.3 L467.0 536.4 L469.0 536.4 L471.0 536.3 L473.0 536.4 L475.0 536.4 L477.0 536.6 L479.0 536.7 L481.0 536.9 L483.0 537.2 L485.0 537.4 L487.0 537.4 L489.0 537.4 L491.0 537.2 L493.0 537.0 L495.0 536.8 L497.0 536.6 L499.0 536.3 L501.0 536.1 L503.0 535.9 L505.0 535.9 L507.0 536.0 L509.0 536.3 L511.0 536.5 L513.0 536.6 L515.0 536.7 L517.0 536.8 L519.0 537.0 L521.0 537.1 L523.0 537.2 L525.0 537.3 L527.0 537.3 L529.0 537.4 L531.0 537.6 L533.0 537.9 L535.0 538.0 L537.0 538.2 L539.0 538.2 L541.0 538.2 L543.0 538.1 L545.0 538.1 L547.0 537.6 L549.0 537.2 L551.0 536.6 L553.0 535.9 L555.0 535.0 L557.0 534.2 L559.0 533.5 L561.0 532.9 L563.0 532.3 L565.0 531.5 L567.0 530.8 L569.0 530.1 L571.0 529.5 L573.0 529.3 L575.0 529.2 L577.0 529.3 L579.0 529.4 L581.0 529.4 L583.0 529.6 L585.0 529.7 L587.0 529.8 L589.0 529.7 L591.0 529.6 L593.0 529.3 L595.0 529.2 L597.0 528.9 L599.0 528.6 L601.0 528.2 L603.0 527.8 L605.0 527.3 L607.0 526.8 L609.0 526.1 L611.0 525.6 L613.0 525.1 L615.0 524.8 L617.0 524.5 L619.0 524.3 L621.0 524.1 L623.0 523.9 L625.0 523.6 L627.0 523.1 L629.0 522.8 L631.0 522.4 L633.0 522.1 L635.0 521.8 L637.0 521.5 L639.0 521.3 L641.0 521.0 L643.0 520.5 L645.0 520.2 L647.0 519.9 L649.0 519.7 L651.0 519.6 L653.0 519.5 L655.0 519.4 L657.0 519.4 L659.0 519.3 L661.0 519.0 L663.0 518.8 L665.0 518.6 L667.0 518.4 L669.0 518.1 L671.0 518.1 L673.0 517.9 L675.0 517.8 L677.0 517.7 L679.0 517.7 L681.0 517.4 L683.0 517.2 L685.0 516.9 L687.0 516.7 L689.0 516.5 L691.0 516.2 L693.0 516.0 L695.0 515.8 L697.0 515.7 L699.0 515.5 L701.0 515.5 L703.0 515.4 L705.0 515.4 L707.0 515.3 L709.0 515.1 L711.0 514.9 L713.0 514.8 L715.0 514.5 L717.0 514.4 L719.0 514.2 L721.0 513.9 L723.0 513.3 L725.0 512.5 L727.0 511.8 L729.0 510.8 L731.0 509.7 L733.0 508.6 L735.0 507.6 L737.0 506.5 L739.0 505.6 L741.0 504.7 L743.0 503.7 L745.0 502.7 L747.0 501.9 L749.0 501.0 L751.0 500.3 L753.0 499.6 L755.0 498.7 L757.0 497.7 L759.0 496.4 L761.0 494.9 L763.0 493.3 L765.0 491.6 L767.0 489.8 L769.0 488.0 L771.0 486.1 L773.0 484.3 L775.0 482.3 L777.0 479.9 L779.0 477.4 L781.0 475.2 L783.0 473.0 L785.0 471.0 L787.0 469.6 L789.0 468.3 L791.0 467.1 L793.0 466.0 L795.0 464.9 L797.0 464.1 L799.0 463.4 L801.0 462.9 L803.0 462.4 L805.0 461.8 L807.0 461.0 L809.0 460.1 L811.0 459.1 L813.0 458.2 L815.0 457.2 L817.0 456.2 L819.0 455.1 L821.0 453.9 L823.0 452.8 L825.0 451.9 L827.0 451.0 L829.0 450.4 L831.0 449.7 L833.0 449.1 L835.0 448.2 L837.0 447.6 L839.0 446.8 L841.0 446.1 L843.0 445.2 L845.0 444.4 L847.0 443.7 L849.0 443.1 L851.0 442.4 L853.0 441.7 L855.0 441.0 L857.0 440.0 L859.0 439.0 L861.0 437.9 L863.0 436.9 L865.0 435.9 L867.0 435.1 L869.0 434.3 L871.0 433.5 L873.0 432.6 L875.0 431.5 L877.0 430.5 L879.0 429.1 L881.0 427.9 L883.0 426.9 L885.0 426.0 L887.0 425.2 L889.0 424.6 L891.0 424.0 L893.0 423.3 L895.0 422.4 L897.0 421.3 L899.0 420.1 L901.0 418.9 L903.0 417.9 L905.0 416.9 L907.0 415.9 L909.0 414.7 L911.0 413.8 L913.0 412.9 L915.0 412.0 L917.0 411.0 L919.0 409.6 L921.0 408.2 L923.0 406.9 L925.0 406.0 L927.0 405.3 L929.0 404.6 L931.0 404.0 L933.0 403.4 L935.0 403.1 L937.0 402.7 L939.0 402.3 L941.0 401.8 L943.0 401.1 L945.0 400.4 L947.0 399.5 L949.0 398.7 L951.0 398.1 L953.0 397.4 L955.0 396.6 L957.0 395.6 L959.0 394.5 L961.0 393.6 L963.0 392.8 L965.0 392.2 L967.0 391.4 L969.0 390.7 L971.0 390.0 L973.0 389.3 L975.0 388.5 L977.0 387.5 L979.0 386.7 L981.0 386.0 L983.0 385.5 L985.0 385.1 L987.0 384.4 L989.0 383.5 L991.0 382.6 L993.0 381.7 L995.0 380.8 L997.0 380.0 L999.0 379.2 L1001.0 378.6 L1003.0 377.9 L1005.0 377.3 L1007.0 376.6 L1009.0 376.0 L1011.0 375.4 L1013.0 374.6 L1015.0 373.8 L1017.0 372.7 L1019.0 371.6 L1021.0 370.5 L1023.0 369.3 L1025.0 367.8 L1027.0 366.4 L1029.0 364.8 L1031.0 363.4 L1033.0 362.1 L1035.0 360.9 L1037.0 359.5 L1039.0 357.9 L1041.0 356.4 L1043.0 354.9 L1045.0 353.6 L1047.0 352.4 L1049.0 351.7 L1051.0 351.2 L1053.0 350.9 L1055.0 350.4 L1057.0 350.2 L1059.0 350.3 L1061.0 350.2 L1063.0 349.9 L1065.0 349.4 L1067.0 348.7 L1069.0 348.1 L1071.0 347.6 L1073.0 346.8 L1075.0 345.8 L1077.0 344.8 L1079.0 343.9 L1081.0 342.9 L1083.0 342.1 L1085.0 341.5 L1087.0 340.6 L1089.0 339.8 L1091.0 338.7 L1093.0 337.8 L1095.0 336.9 L1097.0 336.0 L1099.0 335.1 L1101.0 334.4 L1103.0 333.7 L1105.0 333.2 L1107.0 332.5 L1109.0 331.7 L1111.0 331.1 L1113.0 330.3 L1115.0 329.6 L1117.0 329.1 L1119.0 328.4 L1121.0 327.8 L1123.0 327.1 L1125.0 326.7 L1127.0 326.1 L1129.0 325.5 L1131.0 325.0 L1133.0 324.6 L1135.0 324.0 L1137.0 323.4 L1139.0 322.8 L1141.0 322.4 L1143.0 322.0 L1145.0 321.6 L1147.0 321.2 L1149.0 321.0 L1151.0 320.7 L1153.0 320.2 L1155.0 319.7 L1157.0 319.2 L1159.0 318.7 L1161.0 318.2 L1163.0 317.6 L1165.0 317.0 L1167.0 316.4 L1169.0 315.8 L1171.0 315.4 L1173.0 315.0 L1175.0 314.6 L1177.0 314.2 L1179.0 313.7 L1181.0 313.1 L1183.0 312.4 L1185.0 311.8 L1187.0 311.4 L1189.0 311.1 L1191.0 310.8 L1193.0 310.4 L1195.0 309.9 L1197.0 309.5 L1199.0 309.0 L1201.0 308.4 L1203.0 307.8 L1205.0 307.0 L1207.0 306.4 L1209.0 305.8 L1211.0 305.2 L1213.0 304.6 L1215.0 304.0 L1217.0 303.4 L1219.0 302.8 L1221.0 302.1 L1223.0 301.2 L1225.0 300.3 L1227.0 299.2 L1229.0 298.2 L1231.0 297.4 L1233.0 297.0 L1235.0 296.4 L1237.0 295.6 L1239.0 294.6 L1241.0 293.2 L1243.0 291.7 L1245.0 290.1 L1247.0 288.5 L1249.0 286.6 L1251.0 284.5 L1253.0 282.6 L1255.0 281.3 L1257.0 280.3 L1259.0 279.3 L1261.0 278.3 L1263.0 277.5 L1265.0 276.7 L1267.0 276.0 L1269.0 274.9 L1271.0 273.5 L1273.0 272.2 L1275.0 271.5 L1277.0 271.0 L1279.0 270.7 L1281.0 270.6 L1283.0 270.6 L1285.0 270.3 L1287.0 270.0 L1289.0 269.5 L1291.0 268.9 L1293.0 268.2 L1295.0 267.5 L1297.0 267.0 L1299.0 266.5 L1301.0 265.9 L1303.0 265.2 L1305.0 264.6 L1307.0 263.9 L1309.0 263.3 L1311.0 262.8 L1313.0 262.4 L1315.0 262.2 L1317.0 262.0 L1319.0 261.6 L1321.0 261.3 L1323.0 260.8 L1325.0 260.6 L1327.0 260.6 L1329.0 260.7 L1331.0 260.8 L1333.0 260.8 L1335.0 261.0 L1337.0 261.3 L1339.0 261.8 L1341.0 262.2 L1343.0 262.5 L1345.0 262.8 L1347.0 263.1 L1349.0 263.4 L1351.0 263.6 L1353.0 263.9 L1355.0 264.0 L1357.0 263.8 L1359.0 263.6 L1361.0 263.4 L1363.0 263.2 L1365.0 263.0 L1367.0 262.8 L1369.0 262.4 L1371.0 261.9 L1373.0 261.6 L1375.0 261.5 L1377.0 261.3 L1379.0 261.3 L1381.0 261.2 L1383.0 261.3 L1385.0 261.2 L1387.0 261.2 L1389.0 261.2 L1391.0 261.2 L1393.0 261.2 L1395.0 261.3 L1397.0 261.7 L1399.0 262.0 L1401.0 262.2 L1403.0 262.5 L1405.0 262.8 L1407.0 263.3 L1409.0 263.5 L1411.0 263.6 L1413.0 263.7 L1415.0 263.8 L1417.0 263.7 L1419.0 263.7 L1421.0 263.6 L1423.0 263.3 L1425.0 263.0 L1427.0 262.2 L1429.0 261.4 L1431.0 260.7 L1433.0 259.8 L1435.0 258.7 L1437.0 257.7 L1439.0 256.9 L1441.0 255.9 L1443.0 255.2 L1445.0 254.4 L1447.0 253.7 L1449.0 253.3 L1451.0 252.7 L1453.0 251.8 L1455.0 251.0 L1457.0 250.1 L1459.0 249.1 L1461.0 248.3 L1463.0 247.3 L1465.0 246.1 L1467.0 245.0 L1469.0 243.9 L1471.0 242.5 L1473.0 241.1 L1475.0 239.5 L1477.0 237.8 L1479.0 235.8 L1481.0 233.7 L1483.0 231.3 L1485.0 228.9 L1487.0 226.2 L1489.0 223.7 L1491.0 221.2 L1493.0 219.4 L1495.0 218.2 L1497.0 216.9 L1499.0 215.9 L1501.0 215.3 L1503.0 214.8 L1505.0 214.3 L1507.0 213.7 L1509.0 213.3 L1511.0 212.7 L1513.0 212.3 L1515.0 212.0 L1517.0 211.6" stroke="#000" stroke-width="1.3" fill="none" stroke-linejoin="round"/>
<path d="M0.0 545.0 L1.0 545.5 L3.0 545.7 L5.0 546.0 L7.0 546.0 L9.0 546.6 L11.0 547.3 L13.0 548.1 L15.0 549.1 L17.0 550.2 L19.0 551.1 L21.0 552.2 L23.0 553.2 L25.0 554.2 L27.0 555.0 L29.0 555.4 L31.0 555.8 L33.0 556.4 L35.0 557.0 L37.0 557.4 L39.0 557.8 L41.0 558.6 L43.0 559.1 L45.0 560.0 L47.0 561.0 L49.0 562.1 L51.0 563.2 L53.0 564.1 L55.0 564.6 L57.0 565.0 L59.0 565.0 L61.0 564.8 L63.0 564.3 L65.0 563.6 L67.0 563.1 L69.0 562.8 L71.0 562.5 L73.0 562.5 L75.0 563.1 L77.0 563.4 L79.0 564.0 L81.0 564.3 L83.0 564.4 L85.0 564.8 L87.0 565.6 L89.0 566.7 L91.0 567.0 L93.0 567.1 L95.0 566.9 L97.0 566.3 L99.0 566.3 L101.0 566.8 L103.0 567.9 L105.0 569.3 L107.0 570.5 L109.0 571.0 L111.0 570.8 L113.0 569.5 L115.0 566.7 L117.0 564.0 L119.0 561.2 L121.0 558.0 L123.0 555.8 L125.0 554.0 L127.0 552.7 L129.0 551.8 L131.0 550.4 L133.0 549.1 L135.0 548.4 L137.0 547.6 L139.0 547.1 L141.0 546.8 L143.0 546.5 L145.0 546.2 L147.0 545.8 L149.0 545.3 L151.0 544.7 L153.0 543.8 L155.0 542.7 L157.0 541.4 L159.0 540.3 L161.0 540.0 L163.0 539.4 L165.0 539.3 L167.0 539.5 L169.0 539.3 L171.0 539.1 L173.0 538.8 L175.0 538.3 L177.0 537.2 L179.0 535.7 L181.0 533.7 L183.0 531.4 L185.0 529.9 L187.0 528.6 L189.0 527.7 L191.0 527.0 L193.0 526.7 L195.0 526.2 L197.0 525.9 L199.0 525.5 L201.0 525.1 L203.0 524.4 L205.0 523.1 L207.0 521.9 L209.0 521.3 L211.0 520.7 L213.0 520.3 L215.0 520.4 L217.0 520.5 L219.0 520.5 L221.0 520.8 L223.0 520.8 L225.0 520.9 L227.0 521.5 L229.0 521.6 L231.0 521.7 L233.0 521.7 L235.0 522.0 L237.0 522.7 L239.0 523.5 L241.0 524.1 L243.0 525.1 L245.0 526.0 L247.0 527.3 L249.0 527.9 L251.0 528.5 L253.0 529.0 L255.0 529.4 L257.0 529.8 L259.0 530.0 L261.0 530.1 L263.0 530.6 L265.0 531.3 L267.0 531.3 L269.0 530.7 L271.0 529.1 L273.0 527.2 L275.0 525.1 L277.0 522.8 L279.0 520.9 L281.0 518.9 L283.0 517.1 L285.0 515.0 L287.0 512.8 L289.0 511.4 L291.0 510.6 L293.0 510.4 L295.0 510.4 L297.0 510.1 L299.0 509.8 L301.0 509.4 L303.0 508.9 L305.0 508.5 L307.0 508.4 L309.0 508.3 L311.0 508.8 L313.0 509.3 L315.0 509.7 L317.0 509.7 L319.0 509.4 L321.0 509.3 L323.0 509.2 L325.0 509.2 L327.0 509.3 L329.0 509.6 L331.0 509.8 L333.0 509.7 L335.0 509.5 L337.0 509.0 L339.0 508.9 L341.0 508.7 L343.0 508.8 L345.0 509.0 L347.0 509.3 L349.0 509.7 L351.0 510.5 L353.0 511.3 L355.0 512.3 L357.0 513.0 L359.0 513.8 L361.0 514.4 L363.0 515.3 L365.0 516.0 L367.0 516.4 L369.0 516.3 L371.0 515.8 L373.0 515.8 L375.0 516.3 L377.0 517.3 L379.0 518.0 L381.0 519.0 L383.0 520.1 L385.0 521.1 L387.0 522.2 L389.0 523.6 L391.0 525.1 L393.0 526.5 L395.0 528.3 L397.0 529.8 L399.0 531.4 L401.0 533.2 L403.0 534.8 L405.0 535.7 L407.0 536.7 L409.0 537.7 L411.0 538.2 L413.0 538.8 L415.0 539.1 L417.0 539.2 L419.0 539.2 L421.0 539.3 L423.0 539.4 L425.0 539.6 L427.0 539.5 L429.0 539.0 L431.0 538.9 L433.0 538.7 L435.0 538.6 L437.0 538.5 L439.0 538.4 L441.0 538.8 L443.0 539.0 L445.0 539.5 L447.0 540.2 L449.0 540.7 L451.0 541.3 L453.0 541.1 L455.0 541.0 L457.0 540.9 L459.0 540.5 L461.0 540.3 L463.0 540.0 L465.0 540.1 L467.0 540.0 L469.0 539.6 L471.0 539.3 L473.0 539.1 L475.0 538.9 L477.0 539.0 L479.0 539.1 L481.0 539.5 L483.0 539.8 L485.0 540.0 L487.0 539.9 L489.0 539.6 L491.0 539.1 L493.0 538.4 L495.0 537.8 L497.0 537.1 L499.0 536.5 L501.0 536.1 L503.0 535.6 L505.0 535.5 L507.0 535.9 L509.0 536.5 L511.0 536.9 L513.0 537.2 L515.0 537.4 L517.0 537.5 L519.0 537.9 L521.0 538.0 L523.0 538.1 L525.0 538.3 L527.0 538.2 L529.0 538.4 L531.0 538.8 L533.0 539.3 L535.0 539.5 L537.0 539.8 L539.0 539.8 L541.0 539.5 L543.0 539.3 L545.0 539.0 L547.0 537.9 L549.0 536.9 L551.0 535.6 L553.0 533.9 L555.0 532.2 L557.0 530.6 L559.0 529.2 L561.0 528.3 L563.0 527.2 L565.0 526.0 L567.0 524.9 L569.0 523.7 L571.0 523.0 L573.0 523.0 L575.0 523.3 L577.0 524.1 L579.0 524.9 L581.0 525.4 L583.0 526.1 L585.0 526.6 L587.0 527.1 L589.0 527.2 L591.0 527.1 L593.0 526.6 L595.0 526.7 L597.0 526.3 L599.0 525.7 L601.0 525.2 L603.0 524.5 L605.0 523.7 L607.0 522.8 L609.0 521.5 L611.0 520.9 L613.0 520.2 L615.0 519.8 L617.0 519.7 L619.0 519.7 L621.0 519.7 L623.0 519.5 L625.0 519.1 L627.0 518.5 L629.0 518.1 L631.0 517.8 L633.0 517.4 L635.0 517.2 L637.0 516.9 L639.0 516.8 L641.0 516.6 L643.0 515.9 L645.0 515.6 L647.0 515.2 L649.0 515.2 L651.0 515.3 L653.0 515.6 L655.0 515.8 L657.0 516.0 L659.0 516.0 L661.0 515.6 L663.0 515.5 L665.0 515.3 L667.0 515.2 L669.0 514.9 L671.0 515.0 L673.0 514.9 L675.0 515.1 L677.0 515.1 L679.0 515.2 L681.0 514.8 L683.0 514.6 L685.0 514.1 L687.0 513.8 L689.0 513.8 L691.0 513.3 L693.0 513.0 L695.0 512.9 L697.0 512.9 L699.0 512.7 L701.0 512.9 L703.0 513.0 L705.0 513.2 L707.0 513.2 L709.0 512.8 L711.0 512.6 L713.0 512.5 L715.0 512.2 L717.0 512.1 L719.0 511.8 L721.0 511.3 L723.0 510.3 L725.0 508.6 L727.0 507.3 L729.0 505.5 L731.0 503.5 L733.0 501.5 L735.0 499.8 L737.0 498.2 L739.0 496.7 L741.0 495.6 L743.0 494.2 L745.0 492.7 L747.0 491.7 L749.0 490.7 L751.0 489.9 L753.0 489.3 L755.0 488.3 L757.0 486.9 L759.0 484.9 L761.0 482.6 L763.0 480.2 L765.0 477.5 L767.0 474.7 L769.0 472.0 L771.0 469.2 L773.0 466.8 L775.0 463.8 L777.0 460.2 L779.0 456.3 L781.0 453.3 L783.0 450.4 L785.0 448.0 L787.0 447.0 L789.0 446.1 L791.0 445.4 L793.0 445.0 L795.0 444.5 L797.0 444.4 L799.0 444.6 L801.0 445.3 L803.0 445.7 L805.0 445.8 L807.0 445.4 L809.0 444.9 L811.0 444.0 L813.0 443.2 L815.0 442.3 L817.0 441.4 L819.0 440.3 L821.0 439.1 L823.0 437.9 L825.0 437.1 L827.0 436.5 L829.0 436.4 L831.0 436.1 L833.0 435.9 L835.0 435.1 L837.0 434.9 L839.0 434.3 L841.0 433.8 L843.0 432.9 L845.0 432.2 L847.0 431.8 L849.0 431.4 L851.0 430.9 L853.0 430.4 L855.0 429.7 L857.0 428.5 L859.0 427.3 L861.0 426.0 L863.0 424.7 L865.0 423.6 L867.0 422.7 L869.0 422.2 L871.0 421.4 L873.0 420.5 L875.0 419.1 L877.0 417.9 L879.0 415.9 L881.0 414.4 L883.0 413.4 L885.0 412.5 L887.0 412.0 L889.0 411.9 L891.0 411.6 L893.0 411.1 L895.0 410.1 L897.0 408.8 L899.0 407.3 L901.0 405.6 L903.0 404.6 L905.0 403.5 L907.0 402.5 L909.0 401.0 L911.0 400.2 L913.0 399.5 L915.0 398.6 L917.0 397.5 L919.0 395.7 L921.0 393.7 L923.0 392.1 L925.0 391.3 L927.0 391.1 L929.0 390.8 L931.0 390.7 L933.0 390.6 L935.0 391.0 L937.0 391.1 L939.0 391.3 L941.0 391.1 L943.0 390.6 L945.0 389.8 L947.0 388.9 L949.0 388.1 L951.0 387.6 L953.0 386.9 L955.0 386.1 L957.0 384.7 L959.0 383.3 L961.0 382.3 L963.0 381.5 L965.0 381.0 L967.0 380.4 L969.0 379.8 L971.0 379.2 L973.0 378.4 L975.0 377.6 L977.0 376.5 L979.0 375.5 L981.0 375.0 L983.0 374.8 L985.0 375.0 L987.0 374.2 L989.0 373.0 L991.0 371.9 L993.0 370.9 L995.0 369.8 L997.0 369.0 L999.0 368.3 L1001.0 367.9 L1003.0 367.2 L1005.0 366.8 L1007.0 366.1 L1009.0 365.7 L1011.0 365.4 L1013.0 364.5 L1015.0 363.5 L1017.0 361.9 L1019.0 360.5 L1021.0 359.1 L1023.0 357.3 L1025.0 355.0 L1027.0 353.0 L1029.0 350.5 L1031.0 348.8 L1033.0 347.2 L1035.0 345.8 L1037.0 343.9 L1039.0 341.8 L1041.0 339.8 L1043.0 338.0 L1045.0 336.6 L1047.0 335.5 L1049.0 335.3 L1051.0 335.7 L1053.0 336.4 L1055.0 336.7 L1057.0 337.5 L1059.0 338.7 L1061.0 339.7 L1063.0 339.9 L1065.0 339.6 L1067.0 339.0 L1069.0 338.5 L1071.0 338.2 L1073.0 337.3 L1075.0 335.9 L1077.0 334.4 L1079.0 333.3 L1081.0 332.1 L1083.0 331.3 L1085.0 330.7 L1087.0 329.8 L1089.0 328.9 L1091.0 327.3 L1093.0 326.3 L1095.0 325.4 L1097.0 324.4 L1099.0 323.5 L1101.0 322.8 L1103.0 322.2 L1105.0 322.1 L1107.0 321.6 L1109.0 320.9 L1111.0 320.3 L1113.0 319.6 L1115.0 319.0 L1117.0 318.7 L1119.0 318.1 L1121.0 317.6 L1123.0 317.1 L1125.0 316.9 L1127.0 316.4 L1129.0 316.1 L1131.0 315.8 L1133.0 315.8 L1135.0 315.2 L1137.0 314.6 L1139.0 314.1 L1141.0 313.7 L1143.0 313.8 L1145.0 313.4 L1147.0 313.3 L1149.0 313.6 L1151.0 313.7 L1153.0 313.1 L1155.0 312.5 L1157.0 312.2 L1159.0 311.6 L1161.0 311.1 L1163.0 310.4 L1165.0 309.7 L1167.0 308.9 L1169.0 308.3 L1171.0 308.0 L1173.0 307.7 L1175.0 307.5 L1177.0 307.3 L1179.0 306.7 L1181.0 306.0 L1183.0 305.1 L1185.0 304.3 L1187.0 304.1 L1189.0 304.0 L1191.0 304.0 L1193.0 303.7 L1195.0 303.3 L1197.0 302.8 L1199.0 302.3 L1201.0 301.5 L1203.0 300.8 L1205.0 299.7 L1207.0 298.9 L1209.0 298.3 L1211.0 297.5 L1213.0 296.8 L1215.0 296.2 L1217.0 295.6 L1219.0 294.8 L1221.0 293.9 L1223.0 292.7 L1225.0 291.4 L1227.0 289.8 L1229.0 288.3 L1231.0 287.5 L1233.0 287.3 L1235.0 286.9 L1237.0 285.9 L1239.0 284.5 L1241.0 282.3 L1243.0 279.9 L1245.0 277.4 L1247.0 274.7 L1249.0 271.9 L1251.0 268.5 L1253.0 265.7 L1255.0 264.3 L1257.0 263.5 L1259.0 262.8 L1261.0 262.0 L1263.0 261.7 L1265.0 261.3 L1267.0 261.1 L1269.0 260.1 L1271.0 258.1 L1273.0 256.7 L1275.0 256.5 L1277.0 256.6 L1279.0 257.4 L1281.0 258.3 L1283.0 259.3 L1285.0 259.8 L1287.0 260.0 L1289.0 259.7 L1291.0 259.4 L1293.0 258.5 L1295.0 257.9 L1297.0 257.4 L1299.0 257.4 L1301.0 256.8 L1303.0 255.9 L1305.0 255.4 L1307.0 254.6 L1309.0 254.2 L1311.0 253.9 L1313.0 253.8 L1315.0 254.1 L1317.0 254.3 L1319.0 254.2 L1321.0 254.1 L1323.0 253.6 L1325.0 253.8 L1327.0 254.4 L1329.0 255.2 L1331.0 255.9 L1333.0 256.4 L1335.0 257.2 L1337.0 258.2 L1339.0 259.6 L1341.0 260.8 L1343.0 261.7 L1345.0 262.5 L1347.0 263.1 L1349.0 263.8 L1351.0 264.3 L1353.0 265.0 L1355.0 265.0 L1357.0 264.5 L1359.0 263.9 L1361.0 263.4 L1363.0 262.9 L1365.0 262.6 L1367.0 262.0 L1369.0 261.2 L1371.0 260.1 L1373.0 259.6 L1375.0 259.6 L1377.0 259.3 L1379.0 259.6 L1381.0 259.5 L1383.0 259.7 L1385.0 259.8 L1387.0 259.9 L1389.0 259.9 L1391.0 260.0 L1393.0 260.2 L1395.0 260.6 L1397.0 261.4 L1399.0 262.2 L1401.0 262.6 L1403.0 263.2 L1405.0 264.0 L1407.0 265.1 L1409.0 265.3 L1411.0 265.4 L1413.0 265.5 L1415.0 265.5 L1417.0 265.2 L1419.0 265.1 L1421.0 264.6 L1423.0 264.0 L1425.0 263.1 L1427.0 261.2 L1429.0 259.4 L1431.0 258.0 L1433.0 256.2 L1435.0 254.1 L1437.0 252.2 L1439.0 250.7 L1441.0 249.2 L1443.0 248.0 L1445.0 246.9 L1447.0 246.1 L1449.0 245.8 L1451.0 245.0 L1453.0 243.8 L1455.0 242.6 L1457.0 241.3 L1459.0 240.0 L1461.0 238.8 L1463.0 237.4 L1465.0 235.6 L1467.0 234.1 L1469.0 232.5 L1471.0 230.5 L1473.0 228.4 L1475.0 225.8 L1477.0 223.3 L1479.0 220.1 L1481.0 216.9 L1483.0 213.0 L1485.0 209.2 L1487.0 205.1 L1489.0 201.3 L1491.0 197.9 L1493.0 196.1 L1495.0 195.4 L1497.0 194.6 L1499.0 194.4 L1501.0 194.9 L1503.0 195.6 L1505.0 196.2 L1507.0 196.6 L1509.0 197.1 L1511.0 197.3 L1513.0 197.7 L1515.0 198.5 L1517.0 198.6" stroke="#2489e6" stroke-width="1.35" fill="none" stroke-linejoin="round"/>
<path d="M0.0 753.3 L1.9 779.0 L4.6 766.0 L7.4 768.0 L13.9 790.0 L17.6 773.6 L21.3 802.0 L25.0 766.0 L27.8 775.5 L28.7 770.0 L30.5 787.5 L33.0 755.0 L38.0 775.5 L39.8 764.0 L43.5 783.0 L45.9 764.0 L49.6 791.0 L51.8 775.5 L53.7 787.5 L57.4 751.4 L61.0 733.0 L64.4 725.5 L66.6 755.0 L68.5 740.0 L70.0 746.0 L72.0 740.0 L75.9 783.0 L77.7 759.7 L84.0 770.0 L88.4 798.6 L92.5 749.6 L96.2 726.4 L99.0 749.6 L102.7 785.6 L104.0 783.8 L105.8 789.0 L111.0 740.0 L113.0 734.8 L115.0 706.0 L117.5 709.8 L121.0 705.0 L123.6 720.0 L126.0 750.5 L129.5 736.6 L132.0 737.5 L133.6 743.0 L136.0 743.0 L139.7 767.0 L141.0 741.0 L143.4 739.4 L147.0 758.8 L149.0 751.4 L150.8 749.6 L156.0 712.5 L159.7 750.5 L161.0 739.4 L162.8 746.8 L167.4 754.0 L168.7 782.9 L171.0 781.0 L173.0 740.0 L174.8 730.0 L176.3 748.6 L183.0 703.3 L186.9 749.6 L189.6 743.0 L193.9 759.7 L197.0 745.9 L198.9 754.0 L200.7 754.0 L206.3 720.9 L209.0 726.4 L210.0 731.0 L213.3 771.8 L215.9 759.7 L219.3 767.0 L220.7 752.3 L224.8 792.0 L228.5 760.7 L230.7 758.8 L232.2 745.9 L236.3 781.9 L238.0 770.8 L240.0 779.0 L241.8 773.6 L247.4 804.0 L253.5 754.0 L255.9 758.8 L258.5 739.4 L264.6 786.6 L269.6 714.4 L272.0 725.5 L273.5 719.0 L275.7 729.0 L277.2 712.6 L279.4 719.0 L281.0 738.5 L284.6 718.0 L288.6 753.0 L290.9 753.0 L292.7 762.5 L294.0 760.7 L296.0 772.7 L300.0 741.0 L304.4 758.8 L309.5 777.0 L311.0 760.7 L314.5 783.8 L319.0 744.0 L321.0 741.0 L322.5 759.7 L324.7 750.5 L329.0 777.0 L332.5 740.0 L334.0 743.0 L335.8 736.0 L337.7 767.0 L341.0 749.6 L345.0 773.6 L351.5 786.6 L354.7 795.8 L356.0 764.0 L359.5 773.6 L362.0 784.7 L364.0 769.0 L366.0 779.0 L371.0 736.0 L373.0 745.9 L375.0 779.0 L377.4 779.0 L381.5 791.0 L383.0 789.0 L388.0 807.8 L389.8 793.0 L392.0 791.0 L399.6 817.0 L401.5 799.5 L403.0 801.0 L407.6 771.8 L409.4 776.4 L411.7 777.0 L414.8 786.6 L418.5 727.4 L420.0 741.0 L422.8 733.0 L424.0 734.8 L426.0 729.0 L430.0 753.0 L433.5 721.0 L438.0 749.6 L441.3 788.4 L443.0 768.0 L445.0 766.0 L446.3 783.0 L450.5 766.0 L453.3 762.5 L455.0 727.4 L457.0 731.0 L458.3 725.5 L465.0 770.8 L469.6 733.8 L474.0 760.7 L476.4 763.4 L477.4 750.5 L481.0 782.0 L483.8 770.8 L485.0 773.6 L490.7 734.8 L492.0 711.0 L494.6 715.0 L496.0 740.0 L498.4 730.0 L500.0 736.6 L502.0 736.6 L504.0 766.0 L505.7 760.7 L510.0 792.0 L511.6 776.4 L513.4 772.7 L517.7 751.4 L519.0 754.0 L522.7 734.8 L525.0 757.0 L526.0 749.6 L530.6 794.0 L532.5 797.7 L534.0 757.0 L538.4 755.0 L541.0 724.6 L543.6 761.6 L547.0 714.4 L548.6 736.6 L551.0 736.6 L552.3 720.0 L554.7 714.4 L559.7 737.5 L562.5 730.0 L563.8 733.0 L566.0 714.4 L569.0 725.5 L571.7 764.4 L578.6 794.0 L581.0 770.8 L582.4 788.4 L584.7 779.0 L586.0 777.3 L590.0 746.8 L592.4 769.0 L594.0 742.0 L596.0 747.7 L598.5 744.0 L602.0 727.4 L605.0 717.0 L607.0 719.0 L608.7 709.8 L613.3 749.6 L615.0 754.0 L616.5 747.7 L620.0 779.0 L622.0 770.8 L624.4 744.0 L626.3 735.7 L628.7 750.5 L631.0 753.0 L634.6 744.0 L637.4 743.0 L638.9 751.4 L641.5 729.0 L642.6 734.8 L644.8 720.0 L646.7 744.0 L648.5 749.6 L652.6 784.7 L654.0 764.0 L657.4 778.0 L661.0 731.0 L664.8 769.0 L671.0 740.0 L675.3 770.8 L676.6 766.0 L678.5 771.8 L680.3 741.0 L683.7 735.7 L686.0 734.8 L687.7 732.0 L690.0 741.0 L693.0 734.8 L695.0 721.8 L698.8 790.0 L702.0 766.0 L705.0 754.0 L706.8 770.0 L708.6 767.0 L712.3 727.4 L716.0 765.0 L717.9 745.9 L719.7 739.4 L721.6 718.0 L724.4 705.0 L727.0 703.3 L731.4 692.0 L733.6 702.4 L735.0 721.8 L736.0 712.6 L738.8 725.5 L742.0 718.5 L747.0 718.5 L749.3 734.8 L751.0 740.3 L753.6 728.0 L756.7 701.5 L759.5 687.6 L764.0 686.3 L766.0 683.0 L767.8 688.5 L770.6 688.5 L773.4 684.0 L775.0 699.6 L779.0 686.7 L781.7 704.0 L784.0 709.8 L785.4 718.0 L786.3 758.8 L789.0 769.0 L792.4 755.0 L796.5 766.0 L801.3 791.0 L804.0 772.7 L804.8 779.0 L807.6 775.5 L809.0 736.6 L811.3 726.4 L812.8 745.9 L814.6 742.0 L816.0 728.0 L818.7 737.5 L820.6 725.5 L823.9 720.9 L827.6 772.7 L829.4 768.0 L831.3 750.5 L834.4 756.0 L839.0 741.0 L841.3 740.3 L842.8 720.0 L844.6 725.5 L846.5 762.5 L852.0 728.0 L854.4 755.0 L856.7 738.5 L860.4 731.0 L863.7 713.5 L865.5 747.7 L867.8 756.0 L869.0 747.7 L871.5 744.0 L876.0 710.7 L878.9 710.7 L883.0 740.3 L884.0 738.5 L887.7 767.0 L889.6 764.4 L892.0 733.0 L893.7 736.6 L898.3 713.5 L901.0 705.0 L903.0 731.0 L905.0 742.0 L908.8 726.4 L910.3 751.4 L912.5 740.3 L914.0 750.5 L917.7 716.0 L920.0 710.7 L921.8 727.4 L923.6 736.6 L925.5 764.4 L927.9 770.8 L929.0 761.6 L931.0 771.8 L932.9 753.0 L936.6 771.8 L940.5 739.4 L942.7 756.0 L944.5 740.3 L947.9 735.7 L950.5 745.9 L952.0 736.6 L955.0 733.0 L957.5 713.0 L959.3 727.4 L960.6 724.6 L963.0 741.0 L965.4 741.0 L968.6 754.0 L970.4 754.0 L973.2 726.4 L974.5 730.0 L977.3 715.0 L984.0 780.0 L988.0 729.0 L992.6 724.6 L994.9 728.0 L998.7 758.8 L1000.6 737.5 L1002.4 745.9 L1004.3 733.0 L1006.5 751.4 L1008.4 748.6 L1010.2 748.6 L1015.2 711.6 L1017.2 726.4 L1019.0 714.4 L1025.0 696.8 L1026.9 697.8 L1028.7 692.6 L1030.6 723.7 L1032.4 720.0 L1033.9 712.6 L1035.7 713.5 L1037.6 699.6 L1039.8 699.6 L1042.0 720.9 L1043.9 712.6 L1045.4 743.0 L1047.6 747.7 L1049.0 787.5 L1052.4 768.0 L1056.5 787.5 L1060.2 792.0 L1062.6 777.3 L1065.7 734.8 L1067.6 726.4 L1069.4 763.4 L1071.3 758.8 L1073.0 742.0 L1075.0 742.0 L1076.8 728.0 L1078.7 725.0 L1080.5 727.4 L1082.4 727.4 L1084.2 746.8 L1087.9 724.6 L1090.0 720.0 L1093.5 744.0 L1095.3 749.6 L1097.7 733.0 L1099.0 742.0 L1100.9 735.7 L1102.7 764.4 L1105.0 764.4 L1106.4 744.0 L1108.8 737.5 L1113.3 756.0 L1114.2 736.6 L1116.0 739.4 L1117.9 760.7 L1121.8 745.9 L1123.6 749.6 L1125.5 733.0 L1128.6 757.0 L1130.9 757.9 L1132.7 737.5 L1135.0 737.5 L1136.6 739.4 L1139.2 727.4 L1141.6 753.0 L1143.4 761.6 L1144.4 747.7 L1147.0 772.7 L1148.4 770.0 L1150.0 775.5 L1152.0 742.0 L1154.5 749.6 L1157.3 748.6 L1159.0 724.6 L1161.4 748.6 L1163.0 729.0 L1165.0 720.9 L1166.6 734.8 L1169.0 734.8 L1170.3 722.7 L1172.7 767.0 L1174.9 751.4 L1177.7 740.3 L1180.4 745.9 L1183.6 724.6 L1186.0 756.0 L1187.8 741.0 L1189.7 757.0 L1192.5 750.5 L1194.9 757.0 L1197.0 749.6 L1199.0 746.8 L1201.7 734.8 L1204.0 712.6 L1207.6 745.9 L1210.6 733.8 L1213.7 729.0 L1215.6 732.0 L1217.4 729.0 L1219.3 738.5 L1221.0 733.8 L1223.4 708.0 L1226.3 698.7 L1228.5 713.5 L1230.0 713.5 L1233.0 756.0 L1234.5 739.4 L1236.0 755.0 L1237.8 731.0 L1239.6 723.7 L1242.0 705.0 L1243.7 700.0 L1245.7 719.0 L1248.9 701.5 L1251.3 719.0 L1252.6 720.0 L1255.4 749.6 L1256.8 743.0 L1259.0 753.0 L1260.5 746.8 L1262.8 758.8 L1264.0 759.7 L1266.8 781.0 L1268.3 740.3 L1270.2 729.0 L1273.9 760.7 L1275.2 760.7 L1281.3 787.5 L1283.0 766.0 L1285.0 775.5 L1288.7 750.5 L1290.5 746.8 L1292.4 752.3 L1294.2 739.4 L1296.0 733.8 L1297.9 758.8 L1301.6 751.4 L1304.0 748.6 L1305.3 731.0 L1307.7 749.6 L1309.0 744.0 L1313.3 776.4 L1316.4 770.8 L1318.8 769.0 L1321.0 744.0 L1322.9 735.7 L1324.4 767.0 L1325.7 763.4 L1328.0 769.0 L1329.4 765.3 L1331.2 765.3 L1334.4 779.0 L1335.3 764.4 L1337.7 779.0 L1339.6 796.7 L1340.9 792.0 L1342.7 768.0 L1345.0 768.0 L1346.6 781.0 L1348.8 775.5 L1350.7 755.0 L1352.9 779.0 L1354.4 753.0 L1358.0 733.8 L1359.9 733.0 L1362.0 745.9 L1364.0 739.4 L1365.5 749.6 L1367.7 731.0 L1370.5 716.0 L1373.2 757.0 L1375.6 762.5 L1377.9 764.4 L1380.3 764.4 L1381.6 786.6 L1385.8 748.6 L1387.7 753.0 L1389.0 749.6 L1391.7 767.0 L1394.7 761.6 L1399.0 795.8 L1400.6 781.0 L1404.3 790.0 L1410.2 748.6 L1411.7 752.3 L1414.0 752.3 L1415.4 762.5 L1417.8 739.4 L1419.0 740.3 L1421.9 729.0 L1423.2 710.7 L1424.7 708.9 L1427.0 692.0 L1428.7 692.0 L1430.6 704.0 L1433.4 696.8 L1434.8 695.0 L1436.7 694.0 L1438.5 700.5 L1442.0 730.0 L1443.7 723.7 L1447.8 753.0 L1449.0 753.0 L1452.8 709.8 L1456.0 728.0 L1458.9 718.0 L1463.5 701.5 L1466.3 699.6 L1467.8 706.0 L1471.8 692.0 L1475.2 684.7 L1477.9 715.0 L1479.3 699.3 L1484.2 690.5 L1486.6 685.5 L1489.0 722.9 L1490.5 711.0 L1493.0 759.2 L1497.0 756.3 L1501.9 783.8 L1503.9 785.7 L1505.8 762.2 L1511.7 775.0 L1513.0 772.0 L1514.7 776.9 L1517.0 769.0" stroke="#e2712a" stroke-opacity=".92" stroke-width="1.3" fill="none" stroke-linejoin="round"/>
<circle cx="1511.8" cy="634" r="4" fill="#36cc86"/>
</svg>
<div class="topstrip"><i></i></div>

<!-- legend -->
<svg style="position:absolute;left:4.4px;top:7.4px" width="19.5" height="19.5" viewBox="0 0 19.5 19.5">
<rect width="19.5" height="19.5" rx="2.6" fill="#212224"/>
<path d="M.6 11.700L4.800 6 9.300 2.400l3.900.3 2.100 3.900 3.300 4.500-.3 1.500-6.600 3.900-2.700-.6L.6 12.300z" fill="#f4c141"/>
<path d="M9.300 2.400l3.900.3 2.100 3.900-6 .5z" fill="#fbd055"/>
<path d="M4.800 6.300l3.900.3.3 3-3.900-.3z" fill="#c8921f"/>
<path d="M.9 10.800l4.200-.9.600 3.300-4.500-.9z" fill="#dba62c"/>
<path d="M7.500 11.700l3 .6.300 3.300-3-.9z" fill="#c48c1a"/>
<path d="M10.500 12.300l7.800-1.200-6.600 5.400z" fill="#f8c94a"/>
</svg>
<span class="t" style="left:27.5px;transform:scaleX(.926)">GOLD11 1D</span>
<svg style="position:absolute;left:115px;top:6px" width="60" height="21" viewBox="0 0 60 21">
<circle cx="10.2" cy="9.800" r="8.800" fill="#f1f3f7"/><circle cx="10.2" cy="9.800" r="6.300" fill="none" stroke="#7f9bd0" stroke-width=".7"/>
<text x="10.2" y="12.900" font-size="8.500" font-family="Liberation Sans,sans-serif" font-weight="bold" fill="#3c63a8" text-anchor="middle">[B]</text>
<circle cx="31.3" cy="9.800" r="7.400" fill="#ececec"/>
<rect x="26.800" y="8.600" width="9" height="2.400" fill="#111"/>
<circle cx="49.300" cy="10.100" r="8.300" fill="#1fae68" opacity=".55"/>
<circle cx="49.300" cy="10.100" r="6.600" fill="#25dd83"/>
</svg>
<span class="t" style="left:179.4px;transform:scaleX(0.921)">(Abr</span>
<span class="t v" style="left:212.4px;transform:scaleX(0.959)">22,33</span>
<span class="t" style="left:254px;transform:scaleX(0.966)">Máx</span>
<span class="t v" style="left:287.4px;transform:scaleX(0.951)">22,43</span>
<span class="t" style="left:329px;transform:scaleX(0.982)">Mín</span>
<span class="t v" style="left:359.5px;transform:scaleX(0.974)">22,22</span>
<span class="t" style="left:402px;transform:scaleX(0.808)">Fch</span>
<span class="t v" style="left:428.5px;transform:scaleX(0.959)">22,29</span>
<span class="t" style="left:470px;transform:scaleX(0.816)">V</span>
<span class="t v" style="left:482.4px;transform:scaleX(0.951)">0,41%</span>
<span class="t" style="left:529px;transform:scaleX(0.722)">)</span>
<svg style="position:absolute;left:538px;top:5px" width="48" height="23" viewBox="538 5 48 23">
<rect x="539.9" y="7" width="18.3" height="18.1" rx="4.800" fill="none" stroke="#fff" stroke-opacity=".42" stroke-width="1.400"/>
<path d="M546.7 12v6.800h6.600z" fill="#fff" fill-opacity=".5"/>
<rect x="564.9" y="7" width="18.600" height="18.100" rx="4.800" fill="none" stroke="#fff" stroke-opacity=".42" stroke-width="1.400"/>
<path d="M569.500 15.900h9.200M574.100 11.400v9.100" stroke="#fff" stroke-opacity=".6" stroke-width="2"/>
</svg>
<span class="t" style="left:593.3px;transform:scaleX(.957)">Média Móvel E [200]</span>
<span class="tag" style="left:743.6px;width:44.6px;background:#e53a33">19,62</span>
<span class="t" style="left:788.6px;transform:scaleX(.959)">, Média Móvel E [50]</span>
<span class="tag" style="left:938.6px;width:44px;background:#000;color:#fff">21,83</span>
<span class="t" style="left:983px;transform:scaleX(.963)">, Média Móvel E [21]</span>
<span class="tag" style="left:1133.8px;width:45.2px;background:#2188e2">22,47</span>

<!-- toolbar -->
<svg style="position:absolute;left:660px;top:38px" width="264" height="36" viewBox="660 38 264 36">
<g fill="none" stroke="#fff" stroke-opacity=".46" stroke-width="1.6">
<circle cx="679.2" cy="56.1" r="14.2"/>
<circle cx="769.2" cy="56.1" r="14.2"/>
<circle cx="814" cy="56.1" r="14.2"/>
<circle cx="859.3" cy="56.1" r="14.2"/>
<circle cx="904.2" cy="56.1" r="14.2"/>
</g>
<circle cx="724.3" cy="56.1" r="15" fill="#93a1b6"/>
<g fill="#fff" fill-opacity=".5">
<rect x="677.9" y="47.4" width="2.6" height="5.8"/><rect x="677.9" y="58.9" width="2.6" height="5.9"/>
<rect x="670.6" y="54.8" width="6.2" height="2.5"/><rect x="681.8" y="54.8" width="6.2" height="2.5"/>
<rect x="677.9" y="54.8" width="2.6" height="2.5" fill-opacity=".7"/>
<rect x="762.6" y="54.9" width="13.2" height="2.4"/><rect x="768" y="49.5" width="2.4" height="5.4"/><rect x="768" y="57.3" width="2.4" height="5.4"/>
<rect x="807.4" y="54.9" width="13.2" height="2.4"/>
<rect x="850.7" y="49.900" width="7.500" height="2"/><rect x="850.7" y="55.100" width="7.500" height="2"/><rect x="850.7" y="60.100" width="7.500" height="2"/>
<rect x="860.5" y="47.500" width="1.600" height="17.400"/><path d="M864.2 56.500l5-4.300v8.600z"/>
<rect x="894.4" y="49.900" width="7.600" height="2"/><rect x="894.4" y="55.100" width="7.600" height="2"/><rect x="894.4" y="60.100" width="7.600" height="2"/>
<rect x="904.100" y="47.500" width="1.700" height="17.400"/><path d="M914.800 56.500l-5.300-4.300v8.600z"/>
</g>
<g fill="#35527a">
<path d="M717 54.700h2.300v-1.900h12.500v5.400a7.400 6.500 0 0 1-14.800 0z"/>
<rect x="719.300" y="50" width="1.500" height="4" rx=".6"/>
<rect x="722.900" y="48.600" width="1.700" height="5" rx=".6"/>
<rect x="726.300" y="49.900" width="1.700" height="4" rx=".6"/>
<rect x="729.900" y="51.300" width="1.900" height="3" rx=".6"/>
</g>
</svg>

<!-- crosshair icon -->
<svg style="position:absolute;left:1502px;top:24px" width="20" height="19" viewBox="0 0 20 19" fill="none" stroke="#fff" stroke-width="1.5">
<path d="M1.5 6V3.500a2 2 0 0 1 2-2H6M13.500 1.500H16a2 2 0 0 1 2 2V6M18 12.500V15a2 2 0 0 1-2 2h-2.500M6 17H3.500a2 2 0 0 1-2-2v-2.500"/>
<path d="M4.800 9.300h10M9.800 4.300v10" stroke-width="2.4"/>
</svg>

<!-- right axis -->
<span class="ax" style="top:580.1px">8,80</span>
<span class="ax" style="top:511.3px">10,39</span>
<span class="ax" style="top:451.7px">11,98</span>
<span class="ax" style="top:399.2px">13,57</span>
<span class="ax" style="top:353.0px">15,16</span>
<span class="ax" style="top:311.7px">16,75</span>
<span class="ax" style="top:274.0px">18,34</span>
<span class="ax" style="top:239.3px">19,93</span>
<span class="ax" style="top:206.5px">21,52</span>
<span class="ax" style="top:177.8px">23,11</span>
<span class="ax" style="top:149.1px">24,70</span>
<span class="ax" style="top:124.1px">26,29</span>
<span class="ax" style="top:99.4px">27,88</span>
<span class="ax" style="top:76.7px">29,47</span>
<span class="ax" style="top:54.2px">31,06</span>
<span class="ax" style="top:32.8px">32,65</span>
<span class="ax" style="top:12.6px">34,24</span>
<span class="ax" style="top:715px">70,00</span>
<span class="ax" style="top:779.8px">30,00</span>
<div class="ptag" style="top:24.8px;background:#b1b8c3">33,37</div>
<div class="ptag" style="top:185.7px;background:#2489e6">22,47</div>
<div class="ptag" style="top:204.2px;background:#000;color:#fff">21,83</div>
<div class="ptag" style="top:193.500px;background:#fff">22,29</div>
<div class="ptag" style="top:246.3px;background:#e53a30">19,62</div>
<div class="ptag" style="top:760.2px;background:#e8732a">42,61</div>
<div style="position:absolute;left:1572.3px;top:286.4px;width:9.7px;height:89px;background:rgba(75,73,75,.7);border-radius:3px 0 0 3px"></div>
<svg style="position:absolute;left:1574.500px;top:325px" width="8" height="12" viewBox="0 0 8 12" fill="none" stroke="#b4b6bb" stroke-width="1.300"><path d="M1.700 2l5 4-5 4"/></svg>

<!-- RSI legend -->
<span class="t" style="left:8px;top:660.7px;transform:scaleX(.929)">IFR (RSI) [7]</span>
<span class="tag" style="left:96.6px;top:660.1px;width:46px;height:18.7px;background:#e56f29">42,61</span>

<!-- bottom axis -->
<span class="mo" style="left:26.3px">set</span>
<span class="mo" style="left:64.7px">out</span>
<span class="mo" style="left:102.7px">nov</span>
<span class="mo" style="left:140.0px">dez</span>
<span class="mo" style="left:178.0px">jan</span>
<span class="mo" style="left:219.5px">fev</span>
<span class="mo" style="left:253.9px">mar</span>
<span class="mo" style="left:297.9px">abr</span>
<span class="mo" style="left:331.7px">mai</span>
<span class="mo" style="left:372.7px">jun</span>
<span class="mo" style="left:410.6px">jul</span>
<span class="mo" style="left:451.6px">ago</span>
<span class="mo" style="left:494.0px">set</span>
<span class="mo" style="left:643.2px">jan</span>
<span class="mo" style="left:684.7px">fev</span>
<span class="mo" style="left:720.6px">mar</span>
<span class="mo" style="left:758.0px">abr</span>
<span class="mo" style="left:799.3px">mai</span>
<span class="mo" style="left:836.8px">jun</span>
<span class="mo" style="left:874.8px">jul</span>
<span class="mo" style="left:918.9px">ago</span>
<span class="mo" style="left:960.0px">set</span>
<span class="mo" style="left:999.0px">out</span>
<span class="mo" style="left:1042.6px">nov</span>
<span class="mo" style="left:1079.0px">dez</span>
<span class="mo" style="left:1114.6px">jan</span>
<span class="mo" style="left:1153.6px">fev</span>
<span class="mo" style="left:1191.0px">mar</span>
<span class="mo" style="left:1229.0px">abr</span>
<span class="mo" style="left:1265.0px">mai</span>
<span class="mo" style="left:1303.7px">jun</span>
<span class="mo" style="left:1341.0px">jul</span>
<span class="mo" style="left:1384.0px">ago</span>
<span class="mo" style="left:1423.8px">set</span>
<span class="mo" style="left:1465.4px">out</span>
<span class="tag" style="left:532px;top:821.3px;width:96px;height:17.6px;line-height:17.6px;background:#b4bac7;font-weight:bold;font-size:14.5px;letter-spacing:1.35px;padding-left:1.3px;text-shadow:0 0 1.5px rgba(0,0,0,.7)">08/11/2023</span>
<div class="yr" style="left:0;width:176.700px"><span style="left:73px">2022</span></div>
<div class="yr" style="left:180.300px;width:460.500px"><span style="left:214px">2023</span></div>
<div class="yr" style="left:644.400px;width:467.500px"><span style="left:217.500px">2024</span></div>
<div class="yr" style="left:1115.300px;width:413.500px"><span style="left:190px">2025</span></div>
<div style="position:absolute;left:0;top:862.500px;width:1582px;height:2.500px;background:#2e2e30"></div>
<div style="position:absolute;left:131.500px;top:861.500px;width:96px;height:3.500px;background:#4b4b4f;border-radius:2px 2px 0 0"></div>
<div style="position:absolute;left:1531.200px;top:819px;width:50.800px;height:46px;background:#353535"></div>
</body>
</html>
